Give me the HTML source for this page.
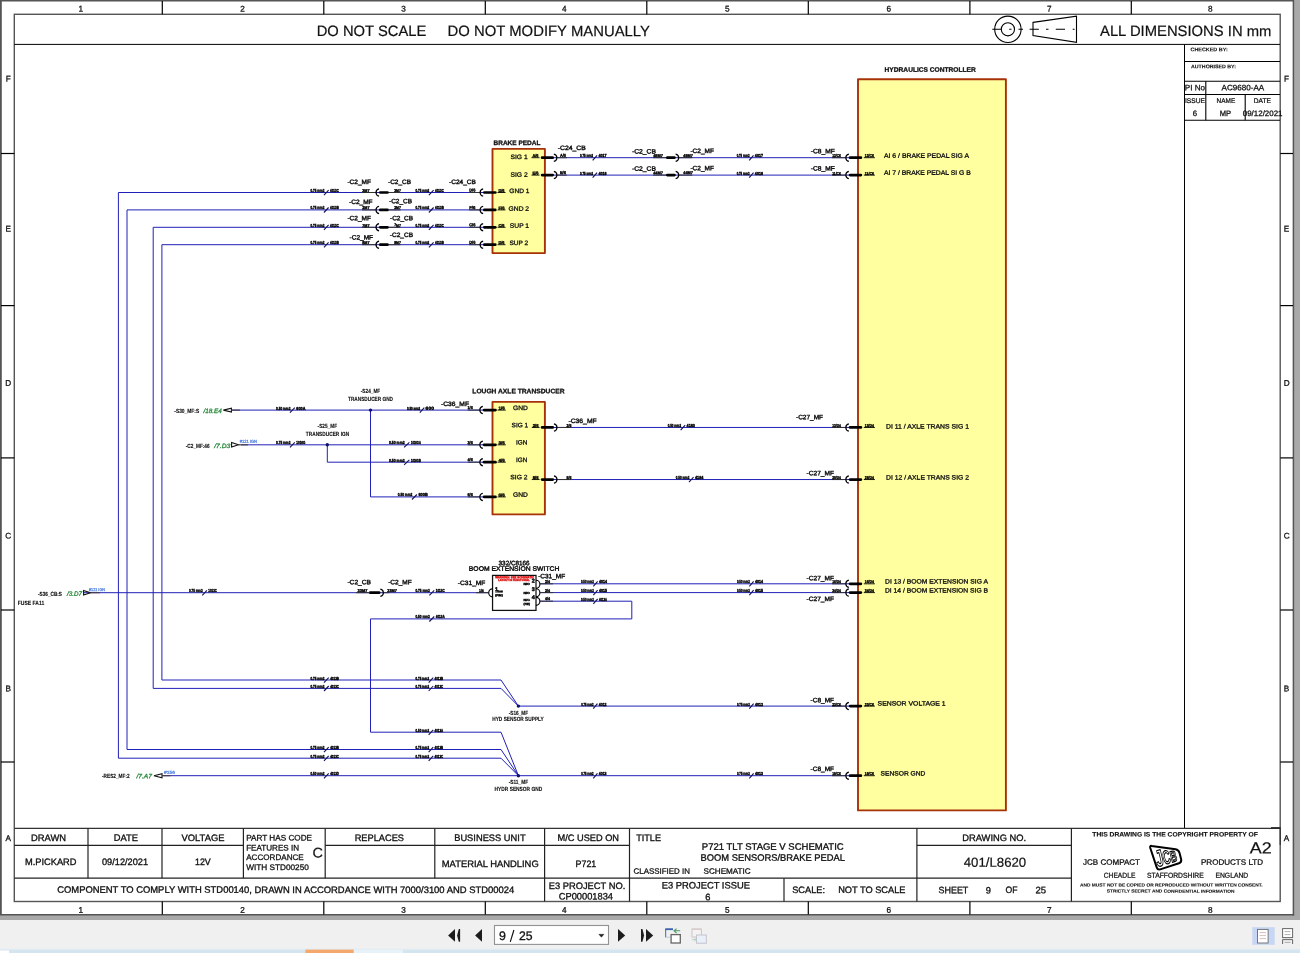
<!DOCTYPE html>
<html><head><meta charset="utf-8"><title>Schematic</title>
<style>
html,body{margin:0;padding:0;background:#fff;width:1300px;height:953px;overflow:hidden}
svg{display:block;will-change:transform;font-family:"Liberation Sans",sans-serif}
text{fill:#111;text-rendering:geometricPrecision}
</style></head><body>
<svg width="1300" height="953" viewBox="0 0 1300 953">
<rect x="0.00" y="0.00" width="1300.00" height="953.00" fill="#fff" stroke="none" stroke-width="1" />
<rect x="1294.00" y="0.00" width="6.00" height="920.00" fill="#a9a9a9" stroke="none" stroke-width="1" />
<rect x="0.00" y="915.00" width="1300.00" height="5.00" fill="#a9a9a9" stroke="none" stroke-width="1" />
<rect x="0.00" y="920.00" width="1300.00" height="29.50" fill="#f0f0f0" stroke="none" stroke-width="1" />
<rect x="0.00" y="948.60" width="1300.00" height="1.20" fill="#e4eef2" stroke="none" stroke-width="1" />
<rect x="0.00" y="949.60" width="1300.00" height="3.40" fill="#d5e5ef" stroke="none" stroke-width="1" />
<rect x="0.00" y="950.50" width="9.00" height="2.50" fill="#fff" stroke="none" stroke-width="1" />
<rect x="305.40" y="949.60" width="48.40" height="3.40" fill="#f4a86c" stroke="none" stroke-width="1" />
<rect x="353.80" y="949.60" width="49.20" height="3.40" fill="#e6f1f8" stroke="none" stroke-width="1" />
<line x1="0.90" y1="0.00" x2="0.90" y2="915.00" stroke="#555" stroke-width="1.8" />
<line x1="0.00" y1="0.80" x2="1294.00" y2="0.80" stroke="#555" stroke-width="1.6" />
<line x1="1293.40" y1="0.00" x2="1293.40" y2="915.50" stroke="#555" stroke-width="1.5" />
<line x1="0.00" y1="914.70" x2="1294.20" y2="914.70" stroke="#555" stroke-width="1.5" />
<rect x="14.30" y="14.30" width="1265.90" height="887.20" fill="none" stroke="#555" stroke-width="1.4" />
<line x1="14.30" y1="44.40" x2="1280.00" y2="44.40" stroke="#000" stroke-width="1" />
<line x1="162.30" y1="1.00" x2="162.30" y2="14.30" stroke="#000" stroke-width="1.2" />
<line x1="162.30" y1="901.50" x2="162.30" y2="914.50" stroke="#000" stroke-width="1.2" />
<line x1="323.80" y1="1.00" x2="323.80" y2="14.30" stroke="#000" stroke-width="1.2" />
<line x1="323.80" y1="901.50" x2="323.80" y2="914.50" stroke="#000" stroke-width="1.2" />
<line x1="485.30" y1="1.00" x2="485.30" y2="14.30" stroke="#000" stroke-width="1.2" />
<line x1="485.30" y1="901.50" x2="485.30" y2="914.50" stroke="#000" stroke-width="1.2" />
<line x1="646.80" y1="1.00" x2="646.80" y2="14.30" stroke="#000" stroke-width="1.2" />
<line x1="646.80" y1="901.50" x2="646.80" y2="914.50" stroke="#000" stroke-width="1.2" />
<line x1="808.30" y1="1.00" x2="808.30" y2="14.30" stroke="#000" stroke-width="1.2" />
<line x1="808.30" y1="901.50" x2="808.30" y2="914.50" stroke="#000" stroke-width="1.2" />
<line x1="969.90" y1="1.00" x2="969.90" y2="14.30" stroke="#000" stroke-width="1.2" />
<line x1="969.90" y1="901.50" x2="969.90" y2="914.50" stroke="#000" stroke-width="1.2" />
<line x1="1131.30" y1="1.00" x2="1131.30" y2="14.30" stroke="#000" stroke-width="1.2" />
<line x1="1131.30" y1="901.50" x2="1131.30" y2="914.50" stroke="#000" stroke-width="1.2" />
<text x="80.80" y="11.59" font-size="8.2" text-anchor="middle" stroke="#111" stroke-width="0.29" transform="rotate(0.03 80.8 11.6)" >1</text>
<text x="80.80" y="912.79" font-size="8.2" text-anchor="middle" stroke="#111" stroke-width="0.29" transform="rotate(0.03 80.8 912.8)" >1</text>
<text x="242.50" y="11.59" font-size="8.2" text-anchor="middle" stroke="#111" stroke-width="0.29" transform="rotate(0.03 242.5 11.6)" >2</text>
<text x="242.50" y="912.79" font-size="8.2" text-anchor="middle" stroke="#111" stroke-width="0.29" transform="rotate(0.03 242.5 912.8)" >2</text>
<text x="403.50" y="11.59" font-size="8.2" text-anchor="middle" stroke="#111" stroke-width="0.29" transform="rotate(0.03 403.5 11.6)" >3</text>
<text x="403.50" y="912.79" font-size="8.2" text-anchor="middle" stroke="#111" stroke-width="0.29" transform="rotate(0.03 403.5 912.8)" >3</text>
<text x="564.40" y="11.59" font-size="8.2" text-anchor="middle" stroke="#111" stroke-width="0.29" transform="rotate(0.03 564.4 11.6)" >4</text>
<text x="564.40" y="912.79" font-size="8.2" text-anchor="middle" stroke="#111" stroke-width="0.29" transform="rotate(0.03 564.4 912.8)" >4</text>
<text x="727.30" y="11.59" font-size="8.2" text-anchor="middle" stroke="#111" stroke-width="0.29" transform="rotate(0.03 727.3 11.6)" >5</text>
<text x="727.30" y="912.79" font-size="8.2" text-anchor="middle" stroke="#111" stroke-width="0.29" transform="rotate(0.03 727.3 912.8)" >5</text>
<text x="888.80" y="11.59" font-size="8.2" text-anchor="middle" stroke="#111" stroke-width="0.29" transform="rotate(0.03 888.8 11.6)" >6</text>
<text x="888.80" y="912.79" font-size="8.2" text-anchor="middle" stroke="#111" stroke-width="0.29" transform="rotate(0.03 888.8 912.8)" >6</text>
<text x="1049.40" y="11.59" font-size="8.2" text-anchor="middle" stroke="#111" stroke-width="0.29" transform="rotate(0.03 1049.4 11.6)" >7</text>
<text x="1049.40" y="912.79" font-size="8.2" text-anchor="middle" stroke="#111" stroke-width="0.29" transform="rotate(0.03 1049.4 912.8)" >7</text>
<text x="1210.30" y="11.59" font-size="8.2" text-anchor="middle" stroke="#111" stroke-width="0.29" transform="rotate(0.03 1210.3 11.6)" >8</text>
<text x="1210.30" y="912.79" font-size="8.2" text-anchor="middle" stroke="#111" stroke-width="0.29" transform="rotate(0.03 1210.3 912.8)" >8</text>
<line x1="1.00" y1="153.50" x2="14.30" y2="153.50" stroke="#000" stroke-width="1.2" />
<line x1="1280.30" y1="153.50" x2="1293.00" y2="153.50" stroke="#000" stroke-width="1.2" />
<line x1="1.00" y1="305.60" x2="14.30" y2="305.60" stroke="#000" stroke-width="1.2" />
<line x1="1280.30" y1="305.60" x2="1293.00" y2="305.60" stroke="#000" stroke-width="1.2" />
<line x1="1.00" y1="457.90" x2="14.30" y2="457.90" stroke="#000" stroke-width="1.2" />
<line x1="1280.30" y1="457.90" x2="1293.00" y2="457.90" stroke="#000" stroke-width="1.2" />
<line x1="1.00" y1="610.00" x2="14.30" y2="610.00" stroke="#000" stroke-width="1.2" />
<line x1="1280.30" y1="610.00" x2="1293.00" y2="610.00" stroke="#000" stroke-width="1.2" />
<line x1="1.00" y1="762.00" x2="14.30" y2="762.00" stroke="#000" stroke-width="1.2" />
<line x1="1280.30" y1="762.00" x2="1293.00" y2="762.00" stroke="#000" stroke-width="1.2" />
<text x="8.20" y="81.59" font-size="8.2" text-anchor="middle" stroke="#111" stroke-width="0.29" transform="rotate(0.03 8.2 81.6)" >F</text>
<text x="1286.60" y="81.59" font-size="8.2" text-anchor="middle" stroke="#111" stroke-width="0.29" transform="rotate(0.03 1286.6 81.6)" >F</text>
<text x="8.20" y="231.59" font-size="8.2" text-anchor="middle" stroke="#111" stroke-width="0.29" transform="rotate(0.03 8.2 231.6)" >E</text>
<text x="1286.60" y="231.59" font-size="8.2" text-anchor="middle" stroke="#111" stroke-width="0.29" transform="rotate(0.03 1286.6 231.6)" >E</text>
<text x="8.20" y="385.79" font-size="8.2" text-anchor="middle" stroke="#111" stroke-width="0.29" transform="rotate(0.03 8.2 385.8)" >D</text>
<text x="1286.60" y="385.79" font-size="8.2" text-anchor="middle" stroke="#111" stroke-width="0.29" transform="rotate(0.03 1286.6 385.8)" >D</text>
<text x="8.20" y="538.59" font-size="8.2" text-anchor="middle" stroke="#111" stroke-width="0.29" transform="rotate(0.03 8.2 538.6)" >C</text>
<text x="1286.60" y="538.59" font-size="8.2" text-anchor="middle" stroke="#111" stroke-width="0.29" transform="rotate(0.03 1286.6 538.6)" >C</text>
<text x="8.20" y="691.29" font-size="8.2" text-anchor="middle" stroke="#111" stroke-width="0.29" transform="rotate(0.03 8.2 691.3)" >B</text>
<text x="1286.60" y="691.29" font-size="8.2" text-anchor="middle" stroke="#111" stroke-width="0.29" transform="rotate(0.03 1286.6 691.3)" >B</text>
<text x="8.20" y="840.99" font-size="8.2" text-anchor="middle" stroke="#111" stroke-width="0.29" transform="rotate(0.03 8.2 841.0)" >A</text>
<text x="1286.60" y="840.99" font-size="8.2" text-anchor="middle" stroke="#111" stroke-width="0.29" transform="rotate(0.03 1286.6 841.0)" >A</text>
<text x="316.70" y="36.07" font-size="15" textLength="109.60" lengthAdjust="spacingAndGlyphs" stroke="#111" stroke-width="0.20" transform="rotate(0.03 316.7 36.1)" >DO NOT SCALE</text>
<text x="447.60" y="36.07" font-size="15" textLength="202.30" lengthAdjust="spacingAndGlyphs" stroke="#111" stroke-width="0.20" transform="rotate(0.03 447.6 36.1)" >DO NOT MODIFY MANUALLY</text>
<text x="1100.00" y="36.07" font-size="15" textLength="171.40" lengthAdjust="spacingAndGlyphs" stroke="#111" stroke-width="0.20" transform="rotate(0.03 1100.0 36.1)" >ALL DIMENSIONS IN mm</text>
<g stroke="#000" stroke-width="1.1" fill="none">
<circle cx="1007.9" cy="29.3" r="13.2"/><circle cx="1007.9" cy="29.3" r="6.6"/>
<path d="M992.3 29.3 H1001.2 M1009.2 29.3 H1011.5 M1018.5 29.3 H1023"/>
<path d="M1033 22.4 L1076.5 16.2 L1076.5 42.4 L1033 35.5 Z"/>
<path d="M1029.6 29.3 H1038.8 M1046 29.3 H1048.5 M1055.8 29.3 H1065 M1072.7 29.3 H1074.6"/>
</g>
<line x1="1184.50" y1="44.40" x2="1184.50" y2="828.30" stroke="#000" stroke-width="1" />
<line x1="1184.50" y1="61.50" x2="1280.00" y2="61.50" stroke="#000" stroke-width="1.1" />
<line x1="1184.50" y1="81.20" x2="1280.00" y2="81.20" stroke="#000" stroke-width="1.1" />
<line x1="1184.50" y1="94.50" x2="1280.00" y2="94.50" stroke="#000" stroke-width="1.1" />
<line x1="1184.50" y1="120.20" x2="1280.00" y2="120.20" stroke="#000" stroke-width="1.1" />
<line x1="1205.80" y1="81.20" x2="1205.80" y2="120.20" stroke="#000" stroke-width="1.1" />
<line x1="1245.20" y1="94.50" x2="1245.20" y2="120.20" stroke="#000" stroke-width="1.1" />
<text x="1190.50" y="51.20" font-size="5.2" font-weight="bold" textLength="37.20" lengthAdjust="spacingAndGlyphs" stroke="#111" stroke-width="0.10" transform="rotate(0.03 1190.5 51.2)" >CHECKED BY:</text>
<text x="1191.00" y="68.20" font-size="5.2" font-weight="bold" textLength="45.00" lengthAdjust="spacingAndGlyphs" stroke="#111" stroke-width="0.10" transform="rotate(0.03 1191.0 68.2)" >AUTHORISED BY:</text>
<text x="1184.80" y="90.14" font-size="7.8" textLength="20.20" lengthAdjust="spacingAndGlyphs" stroke="#111" stroke-width="0.27" transform="rotate(0.03 1184.8 90.1)" >PI No</text>
<text x="1221.50" y="90.14" font-size="7.8" textLength="42.70" lengthAdjust="spacingAndGlyphs" stroke="#111" stroke-width="0.27" transform="rotate(0.03 1221.5 90.1)" >AC9680-AA</text>
<text x="1185.00" y="103.08" font-size="6.8" textLength="20.00" lengthAdjust="spacingAndGlyphs" stroke="#111" stroke-width="0.24" transform="rotate(0.03 1185.0 103.1)" >ISSUE</text>
<text x="1216.50" y="103.08" font-size="6.8" textLength="18.70" lengthAdjust="spacingAndGlyphs" stroke="#111" stroke-width="0.24" transform="rotate(0.03 1216.5 103.1)" >NAME</text>
<text x="1253.80" y="103.08" font-size="6.8" textLength="17.20" lengthAdjust="spacingAndGlyphs" stroke="#111" stroke-width="0.24" transform="rotate(0.03 1253.8 103.1)" >DATE</text>
<text x="1195.00" y="116.04" font-size="7.8" text-anchor="middle" stroke="#111" stroke-width="0.27" transform="rotate(0.03 1195.0 116.0)" >6</text>
<text x="1219.80" y="116.04" font-size="7.8" textLength="11.40" lengthAdjust="spacingAndGlyphs" stroke="#111" stroke-width="0.27" transform="rotate(0.03 1219.8 116.0)" >MP</text>
<text x="1242.80" y="116.04" font-size="7.8" textLength="39.70" lengthAdjust="spacingAndGlyphs" stroke="#111" stroke-width="0.27" transform="rotate(0.03 1242.8 116.0)" >09/12/2021</text>
<line x1="14.30" y1="828.30" x2="1280.00" y2="828.30" stroke="#333" stroke-width="1.3" />
<line x1="1271.00" y1="827.90" x2="1280.60" y2="827.90" stroke="#222" stroke-width="1.5" />
<line x1="1280.30" y1="827.90" x2="1280.30" y2="845.00" stroke="#3a3a3a" stroke-width="1.4" />
<line x1="14.30" y1="845.30" x2="243.40" y2="845.30" stroke="#222" stroke-width="1.2" />
<line x1="325.20" y1="845.30" x2="629.50" y2="845.30" stroke="#222" stroke-width="1.2" />
<line x1="916.90" y1="845.30" x2="1071.40" y2="845.30" stroke="#222" stroke-width="1.2" />
<line x1="14.30" y1="878.20" x2="1071.40" y2="878.20" stroke="#222" stroke-width="1.2" />
<line x1="88.00" y1="828.30" x2="88.00" y2="878.20" stroke="#222" stroke-width="1.2" />
<line x1="162.00" y1="828.30" x2="162.00" y2="878.20" stroke="#222" stroke-width="1.2" />
<line x1="243.40" y1="828.30" x2="243.40" y2="878.20" stroke="#222" stroke-width="1.2" />
<line x1="325.20" y1="828.30" x2="325.20" y2="878.20" stroke="#222" stroke-width="1.2" />
<line x1="434.80" y1="828.30" x2="434.80" y2="878.20" stroke="#222" stroke-width="1.2" />
<line x1="544.60" y1="828.30" x2="544.60" y2="901.50" stroke="#222" stroke-width="1.2" />
<line x1="629.50" y1="828.30" x2="629.50" y2="901.50" stroke="#222" stroke-width="1.2" />
<line x1="784.00" y1="878.20" x2="784.00" y2="901.50" stroke="#222" stroke-width="1.2" />
<line x1="916.90" y1="828.30" x2="916.90" y2="901.50" stroke="#222" stroke-width="1.2" />
<line x1="1071.40" y1="828.30" x2="1071.40" y2="901.50" stroke="#222" stroke-width="1.2" />
<text x="31.00" y="840.89" font-size="9.3" textLength="35.00" lengthAdjust="spacingAndGlyphs" stroke="#111" stroke-width="0.32" transform="rotate(0.03 31.0 840.9)" >DRAWN</text>
<text x="113.70" y="840.89" font-size="9.3" textLength="24.30" lengthAdjust="spacingAndGlyphs" stroke="#111" stroke-width="0.32" transform="rotate(0.03 113.7 840.9)" >DATE</text>
<text x="181.50" y="840.89" font-size="9.3" textLength="43.00" lengthAdjust="spacingAndGlyphs" stroke="#111" stroke-width="0.32" transform="rotate(0.03 181.5 840.9)" >VOLTAGE</text>
<text x="25.00" y="864.89" font-size="9.3" textLength="51.50" lengthAdjust="spacingAndGlyphs" stroke="#111" stroke-width="0.32" transform="rotate(0.03 25.0 864.9)" >M.PICKARD</text>
<text x="102.00" y="864.89" font-size="9.3" textLength="46.00" lengthAdjust="spacingAndGlyphs" stroke="#111" stroke-width="0.32" transform="rotate(0.03 102.0 864.9)" >09/12/2021</text>
<text x="195.00" y="864.89" font-size="9.3" textLength="15.70" lengthAdjust="spacingAndGlyphs" stroke="#111" stroke-width="0.32" transform="rotate(0.03 195.0 864.9)" >12V</text>
<text x="246.20" y="840.52" font-size="8" textLength="65.80" lengthAdjust="spacingAndGlyphs" stroke="#111" stroke-width="0.28" transform="rotate(0.03 246.2 840.5)" >PART HAS CODE</text>
<text x="246.20" y="850.52" font-size="8" textLength="52.80" lengthAdjust="spacingAndGlyphs" stroke="#111" stroke-width="0.28" transform="rotate(0.03 246.2 850.5)" >FEATURES IN</text>
<text x="246.20" y="860.02" font-size="8" textLength="57.60" lengthAdjust="spacingAndGlyphs" stroke="#111" stroke-width="0.28" transform="rotate(0.03 246.2 860.0)" >ACCORDANCE</text>
<text x="246.20" y="869.92" font-size="8" textLength="62.60" lengthAdjust="spacingAndGlyphs" stroke="#111" stroke-width="0.28" transform="rotate(0.03 246.2 869.9)" >WITH STD00250</text>
<text x="312.40" y="857.60" font-size="14" textLength="10.40" lengthAdjust="spacingAndGlyphs" stroke="#111" stroke-width="0.20" transform="rotate(0.03 312.4 857.6)" >C</text>
<text x="354.70" y="840.89" font-size="9.3" textLength="49.30" lengthAdjust="spacingAndGlyphs" stroke="#111" stroke-width="0.32" transform="rotate(0.03 354.7 840.9)" >REPLACES</text>
<text x="454.20" y="840.89" font-size="9.3" textLength="71.40" lengthAdjust="spacingAndGlyphs" stroke="#111" stroke-width="0.32" transform="rotate(0.03 454.2 840.9)" >BUSINESS UNIT</text>
<text x="441.80" y="866.99" font-size="9.3" textLength="96.90" lengthAdjust="spacingAndGlyphs" stroke="#111" stroke-width="0.32" transform="rotate(0.03 441.8 867.0)" >MATERIAL HANDLING</text>
<text x="557.50" y="840.89" font-size="9.3" textLength="61.50" lengthAdjust="spacingAndGlyphs" stroke="#111" stroke-width="0.32" transform="rotate(0.03 557.5 840.9)" >M/C USED ON</text>
<text x="575.60" y="866.99" font-size="9.3" textLength="20.70" lengthAdjust="spacingAndGlyphs" stroke="#111" stroke-width="0.32" transform="rotate(0.03 575.6 867.0)" >P721</text>
<text x="57.20" y="892.79" font-size="9.3" textLength="457.00" lengthAdjust="spacingAndGlyphs" stroke="#111" stroke-width="0.32" transform="rotate(0.03 57.2 892.8)" >COMPONENT TO COMPLY WITH STD00140, DRAWN IN ACCORDANCE WITH 7000/3100 AND STD00024</text>
<text x="548.70" y="888.99" font-size="9.3" textLength="76.60" lengthAdjust="spacingAndGlyphs" stroke="#111" stroke-width="0.32" transform="rotate(0.03 548.7 889.0)" >E3 PROJECT NO.</text>
<text x="558.80" y="899.59" font-size="9.3" textLength="54.20" lengthAdjust="spacingAndGlyphs" stroke="#111" stroke-width="0.32" transform="rotate(0.03 558.8 899.6)" >CP00001834</text>
<text x="636.20" y="840.89" font-size="9.3" textLength="24.80" lengthAdjust="spacingAndGlyphs" stroke="#111" stroke-width="0.32" transform="rotate(0.03 636.2 840.9)" >TITLE</text>
<text x="701.80" y="849.69" font-size="9.3" textLength="141.90" lengthAdjust="spacingAndGlyphs" stroke="#111" stroke-width="0.32" transform="rotate(0.03 701.8 849.7)" >P721 TLT STAGE V SCHEMATIC</text>
<text x="700.60" y="860.69" font-size="9.3" textLength="144.30" lengthAdjust="spacingAndGlyphs" stroke="#111" stroke-width="0.32" transform="rotate(0.03 700.6 860.7)" >BOOM SENSORS/BRAKE PEDAL</text>
<text x="633.60" y="873.74" font-size="7.8" textLength="56.30" lengthAdjust="spacingAndGlyphs" stroke="#111" stroke-width="0.27" transform="rotate(0.03 633.6 873.7)" >CLASSIFIED IN</text>
<text x="703.50" y="873.74" font-size="7.8" textLength="47.20" lengthAdjust="spacingAndGlyphs" stroke="#111" stroke-width="0.27" transform="rotate(0.03 703.5 873.7)" >SCHEMATIC</text>
<text x="661.70" y="888.59" font-size="9.3" textLength="88.30" lengthAdjust="spacingAndGlyphs" stroke="#111" stroke-width="0.32" transform="rotate(0.03 661.7 888.6)" >E3 PROJECT ISSUE</text>
<text x="707.80" y="900.19" font-size="9.3" text-anchor="middle" stroke="#111" stroke-width="0.32" transform="rotate(0.03 707.8 900.2)" >6</text>
<text x="792.20" y="892.89" font-size="9.3" textLength="32.80" lengthAdjust="spacingAndGlyphs" stroke="#111" stroke-width="0.32" transform="rotate(0.03 792.2 892.9)" >SCALE:</text>
<text x="838.20" y="892.89" font-size="9.3" textLength="67.30" lengthAdjust="spacingAndGlyphs" stroke="#111" stroke-width="0.32" transform="rotate(0.03 838.2 892.9)" >NOT TO SCALE</text>
<text x="962.20" y="840.89" font-size="9.3" textLength="64.00" lengthAdjust="spacingAndGlyphs" stroke="#111" stroke-width="0.32" transform="rotate(0.03 962.2 840.9)" >DRAWING NO.</text>
<text x="963.70" y="866.84" font-size="13" textLength="62.50" lengthAdjust="spacingAndGlyphs" stroke="#111" stroke-width="0.20" transform="rotate(0.03 963.7 866.8)" >401/L8620</text>
<text x="938.50" y="893.19" font-size="9.3" textLength="29.80" lengthAdjust="spacingAndGlyphs" stroke="#111" stroke-width="0.32" transform="rotate(0.03 938.5 893.2)" >SHEET</text>
<text x="988.30" y="893.59" font-size="9.3" text-anchor="middle" stroke="#111" stroke-width="0.32" transform="rotate(0.03 988.3 893.6)" >9</text>
<text x="1005.50" y="893.19" font-size="9.3" textLength="12.00" lengthAdjust="spacingAndGlyphs" stroke="#111" stroke-width="0.32" transform="rotate(0.03 1005.5 893.2)" >OF</text>
<text x="1035.40" y="893.19" font-size="9.3" textLength="10.60" lengthAdjust="spacingAndGlyphs" stroke="#111" stroke-width="0.32" transform="rotate(0.03 1035.4 893.2)" >25</text>
<text x="1092.30" y="836.53" font-size="6.4" font-weight="bold" textLength="165.50" lengthAdjust="spacingAndGlyphs" stroke="#111" stroke-width="0.13" transform="rotate(0.03 1092.3 836.5)" >THIS DRAWING IS THE COPYRIGHT PROPERTY OF</text>
<text x="1249.80" y="853.50" font-size="16.2" textLength="21.90" lengthAdjust="spacingAndGlyphs" stroke="#111" stroke-width="0.20" transform="rotate(0.03 1249.8 853.5)" >A2</text>
<text x="1083.00" y="864.64" font-size="7.8" textLength="57.00" lengthAdjust="spacingAndGlyphs" stroke="#111" stroke-width="0.27" transform="rotate(0.03 1083.0 864.6)" >JCB COMPACT</text>
<text x="1201.00" y="864.64" font-size="7.8" textLength="62.00" lengthAdjust="spacingAndGlyphs" stroke="#111" stroke-width="0.27" transform="rotate(0.03 1201.0 864.6)" >PRODUCTS LTD</text>
<text x="1103.70" y="877.72" font-size="7.2" textLength="31.70" lengthAdjust="spacingAndGlyphs" stroke="#111" stroke-width="0.25" transform="rotate(0.03 1103.7 877.7)" >CHEADLE</text>
<text x="1147.00" y="877.72" font-size="7.2" textLength="56.70" lengthAdjust="spacingAndGlyphs" stroke="#111" stroke-width="0.25" transform="rotate(0.03 1147.0 877.7)" >STAFFORDSHIRE</text>
<text x="1215.40" y="877.72" font-size="7.2" textLength="32.90" lengthAdjust="spacingAndGlyphs" stroke="#111" stroke-width="0.25" transform="rotate(0.03 1215.4 877.7)" >ENGLAND</text>
<text x="1080.00" y="886.40" font-size="4.4" font-weight="bold" textLength="182.50" lengthAdjust="spacingAndGlyphs" stroke="#111" stroke-width="0.09" transform="rotate(0.03 1080.0 886.4)" >AND MUST NOT BE COPIED OR REPRODUCED WITHOUT WRITTEN CONSENT.</text>
<text x="1106.80" y="892.60" font-size="4.4" font-weight="bold" textLength="127.70" lengthAdjust="spacingAndGlyphs" stroke="#111" stroke-width="0.09" transform="rotate(0.03 1106.8 892.6)" >STRICTLY SECRET AND CONFIDENTIAL INFORMATION</text>
<g stroke="#000" fill="none" stroke-linejoin="round">
<path d="M1151.6 845.9 L1175.6 849.2 Q1178.6 849.9 1179.4 852.6 L1181.2 859.6 Q1181.6 862.4 1179.0 863.2 L1160.2 869.4 Q1157.6 870.0 1156.8 867.6 L1150.2 847.8 Q1149.8 845.6 1151.6 845.9 Z" stroke-width="2.0"/>
<text x="0" y="0" transform="translate(1157.40,867.00) rotate(-17) scale(0.6,1) skewX(-6)" font-size="23.0" font-weight="bold" stroke="#000" stroke-width="1.25" style="fill:#fff">J</text>
<text x="0" y="0" transform="translate(1164.60,864.70) rotate(-17) scale(0.54,1) skewX(-6)" font-size="19.0" font-weight="bold" stroke="#000" stroke-width="1.25" style="fill:#fff">C</text>
<text x="0" y="0" transform="translate(1171.80,862.60) rotate(-17) scale(0.56,1) skewX(-6)" font-size="15.5" font-weight="bold" stroke="#000" stroke-width="1.25" style="fill:#fff">B</text>
</g>
<rect x="858.00" y="79.20" width="147.90" height="731.20" fill="#ffffa0" stroke="#a83208" stroke-width="1.9" stroke-linejoin="round"/>
<rect x="492.50" y="148.90" width="52.40" height="104.20" fill="#ffffa0" stroke="#a83208" stroke-width="1.9" stroke-linejoin="round"/>
<rect x="492.50" y="401.90" width="52.40" height="112.50" fill="#ffffa0" stroke="#a83208" stroke-width="1.9" stroke-linejoin="round"/>
<path d="M491.00 192.50 L118.40 192.50 L118.40 758.20 L501.00 758.20 L518.40 775.70" stroke="#2020b8" stroke-width="1.0" fill="none" stroke-linejoin="miter"/>
<path d="M491.00 209.90 L127.00 209.90 L127.00 749.50 L501.00 749.50 L518.40 775.70" stroke="#2020b8" stroke-width="1.0" fill="none" stroke-linejoin="miter"/>
<path d="M491.00 227.30 L153.20 227.30 L153.20 688.40 L501.00 688.40 L518.40 706.10" stroke="#2020b8" stroke-width="1.0" fill="none" stroke-linejoin="miter"/>
<path d="M491.00 244.70 L161.90 244.70 L161.90 680.00 L501.00 680.00 L518.40 706.10" stroke="#2020b8" stroke-width="1.0" fill="none" stroke-linejoin="miter"/>
<path d="M546.00 157.70 L858.20 157.70" stroke="#2020b8" stroke-width="1.0" fill="none" stroke-linejoin="miter"/>
<path d="M546.00 175.10 L858.20 175.10" stroke="#2020b8" stroke-width="1.0" fill="none" stroke-linejoin="miter"/>
<path d="M231.50 410.10 L492.00 410.10" stroke="#2020b8" stroke-width="1.0" fill="none" stroke-linejoin="miter"/>
<path d="M370.50 410.10 L370.50 496.90 L492.00 496.90" stroke="#2020b8" stroke-width="1.0" fill="none" stroke-linejoin="miter"/>
<path d="M240.80 444.82 L492.00 444.82" stroke="#2020b8" stroke-width="1.0" fill="none" stroke-linejoin="miter"/>
<path d="M327.30 444.82 L327.30 462.18 L492.00 462.18" stroke="#2020b8" stroke-width="1.0" fill="none" stroke-linejoin="miter"/>
<path d="M546.00 427.46 L858.20 427.46" stroke="#2020b8" stroke-width="1.0" fill="none" stroke-linejoin="miter"/>
<path d="M546.00 479.54 L858.20 479.54" stroke="#2020b8" stroke-width="1.0" fill="none" stroke-linejoin="miter"/>
<path d="M84.00 592.70 L489.00 592.70" stroke="#2020b8" stroke-width="1.0" fill="none" stroke-linejoin="miter"/>
<path d="M540.00 583.80 L858.20 583.80" stroke="#2020b8" stroke-width="1.0" fill="none" stroke-linejoin="miter"/>
<path d="M540.00 592.60 L858.20 592.60" stroke="#2020b8" stroke-width="1.0" fill="none" stroke-linejoin="miter"/>
<path d="M540.00 601.20 L631.80 601.20 L631.80 618.90 L370.50 618.90 L370.50 732.20 L501.00 732.20 L518.40 775.70" stroke="#2020b8" stroke-width="1.0" fill="none" stroke-linejoin="miter"/>
<path d="M518.40 706.10 L858.20 706.10" stroke="#2020b8" stroke-width="1.0" fill="none" stroke-linejoin="miter"/>
<path d="M162.40 775.70 L858.20 775.70" stroke="#2020b8" stroke-width="1.0" fill="none" stroke-linejoin="miter"/>
<circle cx="370.5" cy="410.10" r="1.7" fill="#101070"/>
<circle cx="327.3" cy="444.82" r="1.7" fill="#101070"/>
<circle cx="518.4" cy="706.10" r="1.7" fill="#101070"/>
<circle cx="518.4" cy="775.70" r="1.7" fill="#101070"/>
<text x="493.50" y="145.07" font-size="6.5" font-weight="bold" textLength="47.00" lengthAdjust="spacingAndGlyphs" stroke="#111" stroke-width="0.30" transform="rotate(0.03 493.5 145.1)" >BRAKE PEDAL</text>
<text x="472.30" y="393.17" font-size="6.5" font-weight="bold" textLength="92.20" lengthAdjust="spacingAndGlyphs" stroke="#111" stroke-width="0.30" transform="rotate(0.03 472.3 393.2)" >LOUGH AXLE TRANSDUCER</text>
<text x="884.60" y="71.77" font-size="6.5" font-weight="bold" textLength="91.20" lengthAdjust="spacingAndGlyphs" stroke="#111" stroke-width="0.30" transform="rotate(0.03 884.6 71.8)" >HYDRAULICS CONTROLLER</text>
<text x="510.50" y="159.10" font-size="6.3" textLength="17.20" lengthAdjust="spacingAndGlyphs" stroke="#111" stroke-width="0.30" transform="rotate(0.03 510.5 159.1)" >SIG 1</text>
<text x="510.50" y="176.80" font-size="6.3" textLength="17.20" lengthAdjust="spacingAndGlyphs" stroke="#111" stroke-width="0.30" transform="rotate(0.03 510.5 176.8)" >SIG 2</text>
<text x="509.30" y="193.10" font-size="6.3" textLength="20.10" lengthAdjust="spacingAndGlyphs" stroke="#111" stroke-width="0.30" transform="rotate(0.03 509.3 193.1)" >GND 1</text>
<text x="508.60" y="210.80" font-size="6.3" textLength="20.50" lengthAdjust="spacingAndGlyphs" stroke="#111" stroke-width="0.30" transform="rotate(0.03 508.6 210.8)" >GND 2</text>
<text x="509.80" y="227.80" font-size="6.3" textLength="19.30" lengthAdjust="spacingAndGlyphs" stroke="#111" stroke-width="0.30" transform="rotate(0.03 509.8 227.8)" >SUP 1</text>
<text x="509.40" y="245.00" font-size="6.3" textLength="18.80" lengthAdjust="spacingAndGlyphs" stroke="#111" stroke-width="0.30" transform="rotate(0.03 509.4 245.0)" >SUP 2</text>
<text x="532.50" y="157.20" font-size="4.2" font-weight="bold" textLength="6.00" lengthAdjust="spacingAndGlyphs" fill="#000" stroke="#000" stroke-width="0.35" style="fill:#000" transform="rotate(0.03 532.5 157.2)">A/6</text>
<line x1="531.50" y1="157.70" x2="539.50" y2="157.70" stroke="#000" stroke-width="0.9" />
<line x1="556.90" y1="157.70" x2="566.90" y2="157.70" stroke="#333" stroke-width="1.0" />
<path d="M553.84 154.06 A3.7 3.7 0 0 1 553.84 161.34" stroke="#000" stroke-width="1.2" fill="none" />
<line x1="542.10" y1="157.70" x2="552.65" y2="157.70" stroke="#000" stroke-width="2.7" stroke-linecap="round"/>
<text x="559.90" y="156.70" font-size="4.2" font-weight="bold" textLength="6.10" lengthAdjust="spacingAndGlyphs" fill="#000" stroke="#000" stroke-width="0.35" style="fill:#000" transform="rotate(0.03 559.9 156.7)">A/6</text>
<text x="532.50" y="174.60" font-size="4.2" font-weight="bold" textLength="6.00" lengthAdjust="spacingAndGlyphs" fill="#000" stroke="#000" stroke-width="0.35" style="fill:#000" transform="rotate(0.03 532.5 174.6)">E/6</text>
<line x1="531.50" y1="175.10" x2="539.50" y2="175.10" stroke="#000" stroke-width="0.9" />
<line x1="556.90" y1="175.10" x2="566.90" y2="175.10" stroke="#333" stroke-width="1.0" />
<path d="M553.84 171.46 A3.7 3.7 0 0 1 553.84 178.74" stroke="#000" stroke-width="1.2" fill="none" />
<line x1="542.10" y1="175.10" x2="552.65" y2="175.10" stroke="#000" stroke-width="2.7" stroke-linecap="round"/>
<text x="559.90" y="174.10" font-size="4.2" font-weight="bold" textLength="6.10" lengthAdjust="spacingAndGlyphs" fill="#000" stroke="#000" stroke-width="0.35" style="fill:#000" transform="rotate(0.03 559.9 174.1)">E/6</text>
<line x1="469.10" y1="192.50" x2="480.10" y2="192.50" stroke="#333" stroke-width="1.0" />
<path d="M483.16 188.86 A3.7 3.7 0 0 0 483.16 196.14" stroke="#000" stroke-width="1.2" fill="none" />
<line x1="484.35" y1="192.50" x2="495.30" y2="192.50" stroke="#000" stroke-width="2.7" stroke-linecap="round"/>
<text x="498.50" y="192.00" font-size="4.2" font-weight="bold" textLength="6.00" lengthAdjust="spacingAndGlyphs" fill="#000" stroke="#000" stroke-width="0.35" style="fill:#000" transform="rotate(0.03 498.5 192.0)">D/6</text>
<line x1="497.50" y1="192.50" x2="505.50" y2="192.50" stroke="#000" stroke-width="0.9" />
<text x="469.20" y="191.50" font-size="4.2" font-weight="bold" textLength="6.20" lengthAdjust="spacingAndGlyphs" fill="#000" stroke="#000" stroke-width="0.35" style="fill:#000" transform="rotate(0.03 469.2 191.5)">D/6</text>
<line x1="469.10" y1="209.90" x2="480.10" y2="209.90" stroke="#333" stroke-width="1.0" />
<path d="M483.16 206.26 A3.7 3.7 0 0 0 483.16 213.54" stroke="#000" stroke-width="1.2" fill="none" />
<line x1="484.35" y1="209.90" x2="495.30" y2="209.90" stroke="#000" stroke-width="2.7" stroke-linecap="round"/>
<text x="498.50" y="209.40" font-size="4.2" font-weight="bold" textLength="6.00" lengthAdjust="spacingAndGlyphs" fill="#000" stroke="#000" stroke-width="0.35" style="fill:#000" transform="rotate(0.03 498.5 209.4)">F/6</text>
<line x1="497.50" y1="209.90" x2="505.50" y2="209.90" stroke="#000" stroke-width="0.9" />
<text x="469.20" y="208.90" font-size="4.2" font-weight="bold" textLength="6.20" lengthAdjust="spacingAndGlyphs" fill="#000" stroke="#000" stroke-width="0.35" style="fill:#000" transform="rotate(0.03 469.2 208.9)">F/6</text>
<line x1="469.10" y1="227.30" x2="480.10" y2="227.30" stroke="#333" stroke-width="1.0" />
<path d="M483.16 223.66 A3.7 3.7 0 0 0 483.16 230.94" stroke="#000" stroke-width="1.2" fill="none" />
<line x1="484.35" y1="227.30" x2="495.30" y2="227.30" stroke="#000" stroke-width="2.7" stroke-linecap="round"/>
<text x="498.50" y="226.80" font-size="4.2" font-weight="bold" textLength="6.00" lengthAdjust="spacingAndGlyphs" fill="#000" stroke="#000" stroke-width="0.35" style="fill:#000" transform="rotate(0.03 498.5 226.8)">C/6</text>
<line x1="497.50" y1="227.30" x2="505.50" y2="227.30" stroke="#000" stroke-width="0.9" />
<text x="469.20" y="226.30" font-size="4.2" font-weight="bold" textLength="6.20" lengthAdjust="spacingAndGlyphs" fill="#000" stroke="#000" stroke-width="0.35" style="fill:#000" transform="rotate(0.03 469.2 226.3)">C/6</text>
<line x1="469.10" y1="244.70" x2="480.10" y2="244.70" stroke="#333" stroke-width="1.0" />
<path d="M483.16 241.06 A3.7 3.7 0 0 0 483.16 248.34" stroke="#000" stroke-width="1.2" fill="none" />
<line x1="484.35" y1="244.70" x2="495.30" y2="244.70" stroke="#000" stroke-width="2.7" stroke-linecap="round"/>
<text x="498.50" y="244.20" font-size="4.2" font-weight="bold" textLength="6.00" lengthAdjust="spacingAndGlyphs" fill="#000" stroke="#000" stroke-width="0.35" style="fill:#000" transform="rotate(0.03 498.5 244.2)">D/6</text>
<line x1="497.50" y1="244.70" x2="505.50" y2="244.70" stroke="#000" stroke-width="0.9" />
<text x="469.20" y="243.70" font-size="4.2" font-weight="bold" textLength="6.20" lengthAdjust="spacingAndGlyphs" fill="#000" stroke="#000" stroke-width="0.35" style="fill:#000" transform="rotate(0.03 469.2 243.7)">D/6</text>
<line x1="362.00" y1="192.50" x2="376.00" y2="192.50" stroke="#333" stroke-width="1.0" />
<path d="M379.06 188.86 A3.7 3.7 0 0 0 379.06 196.14" stroke="#000" stroke-width="1.2" fill="none" />
<line x1="380.25" y1="192.50" x2="387.50" y2="192.50" stroke="#000" stroke-width="2.7" stroke-linecap="round"/>
<text x="362.20" y="191.70" font-size="4.2" font-weight="bold" textLength="7.30" lengthAdjust="spacingAndGlyphs" fill="#000" stroke="#000" stroke-width="0.35" style="fill:#000" transform="rotate(0.03 362.2 191.7)">3M7</text>
<text x="394.20" y="191.70" font-size="4.2" font-weight="bold" textLength="6.60" lengthAdjust="spacingAndGlyphs" fill="#000" stroke="#000" stroke-width="0.35" style="fill:#000" transform="rotate(0.03 394.2 191.7)">3M7</text>
<line x1="388.80" y1="192.50" x2="400.60" y2="192.50" stroke="#333" stroke-width="1.0" />
<text x="310.50" y="192.05" font-size="4.4" font-weight="bold" textLength="13.87" lengthAdjust="spacingAndGlyphs" fill="#000" stroke="#000" stroke-width="0.38" style="fill:#000" transform="rotate(0.03 310.5 192.1)">0.75 mm2</text>
<text x="330.03" y="192.05" font-size="4.4" font-weight="bold" textLength="8.77" lengthAdjust="spacingAndGlyphs" fill="#000" stroke="#000" stroke-width="0.38" style="fill:#000" transform="rotate(0.03 330.0 192.1)">4013C</text>
<line x1="323.94" y1="195.10" x2="328.61" y2="190.10" stroke="#101058" stroke-width="1.1" />
<text x="415.40" y="192.05" font-size="4.4" font-weight="bold" textLength="13.92" lengthAdjust="spacingAndGlyphs" fill="#000" stroke="#000" stroke-width="0.38" style="fill:#000" transform="rotate(0.03 415.4 192.1)">0.75 mm2</text>
<text x="435.00" y="192.05" font-size="4.4" font-weight="bold" textLength="8.80" lengthAdjust="spacingAndGlyphs" fill="#000" stroke="#000" stroke-width="0.38" style="fill:#000" transform="rotate(0.03 435.0 192.1)">4013C</text>
<line x1="428.89" y1="195.10" x2="433.58" y2="190.10" stroke="#101058" stroke-width="1.1" />
<line x1="362.00" y1="209.90" x2="376.00" y2="209.90" stroke="#333" stroke-width="1.0" />
<path d="M379.06 206.26 A3.7 3.7 0 0 0 379.06 213.54" stroke="#000" stroke-width="1.2" fill="none" />
<line x1="380.25" y1="209.90" x2="387.50" y2="209.90" stroke="#000" stroke-width="2.7" stroke-linecap="round"/>
<text x="362.20" y="209.10" font-size="4.2" font-weight="bold" textLength="7.30" lengthAdjust="spacingAndGlyphs" fill="#000" stroke="#000" stroke-width="0.35" style="fill:#000" transform="rotate(0.03 362.2 209.1)">2M7</text>
<text x="394.20" y="209.10" font-size="4.2" font-weight="bold" textLength="6.60" lengthAdjust="spacingAndGlyphs" fill="#000" stroke="#000" stroke-width="0.35" style="fill:#000" transform="rotate(0.03 394.2 209.1)">2M7</text>
<line x1="388.80" y1="209.90" x2="400.60" y2="209.90" stroke="#333" stroke-width="1.0" />
<text x="310.50" y="209.45" font-size="4.4" font-weight="bold" textLength="13.87" lengthAdjust="spacingAndGlyphs" fill="#000" stroke="#000" stroke-width="0.38" style="fill:#000" transform="rotate(0.03 310.5 209.4)">0.75 mm2</text>
<text x="330.03" y="209.45" font-size="4.4" font-weight="bold" textLength="8.77" lengthAdjust="spacingAndGlyphs" fill="#000" stroke="#000" stroke-width="0.38" style="fill:#000" transform="rotate(0.03 330.0 209.4)">4013B</text>
<line x1="323.94" y1="212.50" x2="328.61" y2="207.50" stroke="#101058" stroke-width="1.1" />
<text x="415.40" y="209.45" font-size="4.4" font-weight="bold" textLength="13.92" lengthAdjust="spacingAndGlyphs" fill="#000" stroke="#000" stroke-width="0.38" style="fill:#000" transform="rotate(0.03 415.4 209.4)">0.75 mm2</text>
<text x="435.00" y="209.45" font-size="4.4" font-weight="bold" textLength="8.80" lengthAdjust="spacingAndGlyphs" fill="#000" stroke="#000" stroke-width="0.38" style="fill:#000" transform="rotate(0.03 435.0 209.4)">4013B</text>
<line x1="428.89" y1="212.50" x2="433.58" y2="207.50" stroke="#101058" stroke-width="1.1" />
<line x1="362.00" y1="227.30" x2="376.00" y2="227.30" stroke="#333" stroke-width="1.0" />
<path d="M379.06 223.66 A3.7 3.7 0 0 0 379.06 230.94" stroke="#000" stroke-width="1.2" fill="none" />
<line x1="380.25" y1="227.30" x2="387.50" y2="227.30" stroke="#000" stroke-width="2.7" stroke-linecap="round"/>
<text x="362.20" y="226.50" font-size="4.2" font-weight="bold" textLength="7.30" lengthAdjust="spacingAndGlyphs" fill="#000" stroke="#000" stroke-width="0.35" style="fill:#000" transform="rotate(0.03 362.2 226.5)">7M7</text>
<text x="394.20" y="226.50" font-size="4.2" font-weight="bold" textLength="6.60" lengthAdjust="spacingAndGlyphs" fill="#000" stroke="#000" stroke-width="0.35" style="fill:#000" transform="rotate(0.03 394.2 226.5)">7M7</text>
<line x1="388.80" y1="227.30" x2="400.60" y2="227.30" stroke="#333" stroke-width="1.0" />
<text x="310.50" y="226.85" font-size="4.4" font-weight="bold" textLength="13.87" lengthAdjust="spacingAndGlyphs" fill="#000" stroke="#000" stroke-width="0.38" style="fill:#000" transform="rotate(0.03 310.5 226.8)">0.75 mm2</text>
<text x="330.03" y="226.85" font-size="4.4" font-weight="bold" textLength="8.77" lengthAdjust="spacingAndGlyphs" fill="#000" stroke="#000" stroke-width="0.38" style="fill:#000" transform="rotate(0.03 330.0 226.8)">4013C</text>
<line x1="323.94" y1="229.90" x2="328.61" y2="224.90" stroke="#101058" stroke-width="1.1" />
<text x="415.40" y="226.85" font-size="4.4" font-weight="bold" textLength="13.92" lengthAdjust="spacingAndGlyphs" fill="#000" stroke="#000" stroke-width="0.38" style="fill:#000" transform="rotate(0.03 415.4 226.8)">0.75 mm2</text>
<text x="435.00" y="226.85" font-size="4.4" font-weight="bold" textLength="8.80" lengthAdjust="spacingAndGlyphs" fill="#000" stroke="#000" stroke-width="0.38" style="fill:#000" transform="rotate(0.03 435.0 226.8)">4013C</text>
<line x1="428.89" y1="229.90" x2="433.58" y2="224.90" stroke="#101058" stroke-width="1.1" />
<line x1="362.00" y1="244.70" x2="376.00" y2="244.70" stroke="#333" stroke-width="1.0" />
<path d="M379.06 241.06 A3.7 3.7 0 0 0 379.06 248.34" stroke="#000" stroke-width="1.2" fill="none" />
<line x1="380.25" y1="244.70" x2="387.50" y2="244.70" stroke="#000" stroke-width="2.7" stroke-linecap="round"/>
<text x="362.20" y="243.90" font-size="4.2" font-weight="bold" textLength="7.30" lengthAdjust="spacingAndGlyphs" fill="#000" stroke="#000" stroke-width="0.35" style="fill:#000" transform="rotate(0.03 362.2 243.9)">8M7</text>
<text x="394.20" y="243.90" font-size="4.2" font-weight="bold" textLength="6.60" lengthAdjust="spacingAndGlyphs" fill="#000" stroke="#000" stroke-width="0.35" style="fill:#000" transform="rotate(0.03 394.2 243.9)">8M7</text>
<line x1="388.80" y1="244.70" x2="400.60" y2="244.70" stroke="#333" stroke-width="1.0" />
<text x="310.50" y="244.25" font-size="4.4" font-weight="bold" textLength="13.87" lengthAdjust="spacingAndGlyphs" fill="#000" stroke="#000" stroke-width="0.38" style="fill:#000" transform="rotate(0.03 310.5 244.2)">0.75 mm2</text>
<text x="330.03" y="244.25" font-size="4.4" font-weight="bold" textLength="8.77" lengthAdjust="spacingAndGlyphs" fill="#000" stroke="#000" stroke-width="0.38" style="fill:#000" transform="rotate(0.03 330.0 244.2)">4013B</text>
<line x1="323.94" y1="247.30" x2="328.61" y2="242.30" stroke="#101058" stroke-width="1.1" />
<text x="415.40" y="244.25" font-size="4.4" font-weight="bold" textLength="13.92" lengthAdjust="spacingAndGlyphs" fill="#000" stroke="#000" stroke-width="0.38" style="fill:#000" transform="rotate(0.03 415.4 244.2)">0.75 mm2</text>
<text x="435.00" y="244.25" font-size="4.4" font-weight="bold" textLength="8.80" lengthAdjust="spacingAndGlyphs" fill="#000" stroke="#000" stroke-width="0.38" style="fill:#000" transform="rotate(0.03 435.0 244.2)">4013B</text>
<line x1="428.89" y1="247.30" x2="433.58" y2="242.30" stroke="#101058" stroke-width="1.1" />
<text x="347.40" y="183.90" font-size="6.3" textLength="23.60" lengthAdjust="spacingAndGlyphs" stroke="#111" stroke-width="0.40" transform="rotate(0.03 347.4 183.9)" >-C2_MF</text>
<text x="388.00" y="183.90" font-size="6.3" textLength="23.00" lengthAdjust="spacingAndGlyphs" stroke="#111" stroke-width="0.40" transform="rotate(0.03 388.0 183.9)" >-C2_CB</text>
<text x="449.00" y="183.90" font-size="6.3" textLength="27.00" lengthAdjust="spacingAndGlyphs" stroke="#111" stroke-width="0.40" transform="rotate(0.03 449.0 183.9)" >-C24_CB</text>
<text x="349.00" y="204.10" font-size="6.3" textLength="23.60" lengthAdjust="spacingAndGlyphs" stroke="#111" stroke-width="0.40" transform="rotate(0.03 349.0 204.1)" >-C2_MF</text>
<text x="389.00" y="203.30" font-size="6.3" textLength="23.00" lengthAdjust="spacingAndGlyphs" stroke="#111" stroke-width="0.40" transform="rotate(0.03 389.0 203.3)" >-C2_CB</text>
<text x="347.40" y="220.30" font-size="6.3" textLength="23.60" lengthAdjust="spacingAndGlyphs" stroke="#111" stroke-width="0.40" transform="rotate(0.03 347.4 220.3)" >-C2_MF</text>
<text x="390.00" y="220.30" font-size="6.3" textLength="23.00" lengthAdjust="spacingAndGlyphs" stroke="#111" stroke-width="0.40" transform="rotate(0.03 390.0 220.3)" >-C2_CB</text>
<text x="349.60" y="239.60" font-size="6.3" textLength="23.40" lengthAdjust="spacingAndGlyphs" stroke="#111" stroke-width="0.40" transform="rotate(0.03 349.6 239.6)" >-C2_MF</text>
<text x="389.80" y="237.10" font-size="6.3" textLength="23.20" lengthAdjust="spacingAndGlyphs" stroke="#111" stroke-width="0.40" transform="rotate(0.03 389.8 237.1)" >-C2_CB</text>
<text x="557.80" y="149.90" font-size="6.3" textLength="28.00" lengthAdjust="spacingAndGlyphs" stroke="#111" stroke-width="0.40" transform="rotate(0.03 557.8 149.9)" >-C24_CB</text>
<text x="632.00" y="153.50" font-size="6.3" textLength="23.90" lengthAdjust="spacingAndGlyphs" stroke="#111" stroke-width="0.40" transform="rotate(0.03 632.0 153.5)" >-C2_CB</text>
<text x="690.40" y="153.00" font-size="6.3" textLength="23.60" lengthAdjust="spacingAndGlyphs" stroke="#111" stroke-width="0.40" transform="rotate(0.03 690.4 153.0)" >-C2_MF</text>
<text x="810.70" y="153.30" font-size="6.3" textLength="24.10" lengthAdjust="spacingAndGlyphs" stroke="#111" stroke-width="0.40" transform="rotate(0.03 810.7 153.3)" >-C8_MF</text>
<line x1="678.70" y1="157.70" x2="692.30" y2="157.70" stroke="#333" stroke-width="1.0" />
<path d="M675.64 154.06 A3.7 3.7 0 0 1 675.64 161.34" stroke="#000" stroke-width="1.2" fill="none" />
<line x1="667.30" y1="157.70" x2="674.45" y2="157.70" stroke="#000" stroke-width="2.7" stroke-linecap="round"/>
<line x1="653.00" y1="157.70" x2="666.00" y2="157.70" stroke="#333" stroke-width="1.0" />
<text x="653.20" y="156.90" font-size="4.2" font-weight="bold" textLength="9.80" lengthAdjust="spacingAndGlyphs" fill="#000" stroke="#000" stroke-width="0.35" style="fill:#000" transform="rotate(0.03 653.2 156.9)">45M7</text>
<text x="683.30" y="156.90" font-size="4.2" font-weight="bold" textLength="9.70" lengthAdjust="spacingAndGlyphs" fill="#000" stroke="#000" stroke-width="0.35" style="fill:#000" transform="rotate(0.03 683.3 156.9)">45M7</text>
<text x="580.00" y="157.25" font-size="4.4" font-weight="bold" textLength="13.08" lengthAdjust="spacingAndGlyphs" fill="#000" stroke="#000" stroke-width="0.38" style="fill:#000" transform="rotate(0.03 580.0 157.2)">0.75 mm2</text>
<text x="598.42" y="157.25" font-size="4.4" font-weight="bold" textLength="8.28" lengthAdjust="spacingAndGlyphs" fill="#000" stroke="#000" stroke-width="0.38" style="fill:#000" transform="rotate(0.03 598.4 157.2)">4017</text>
<line x1="592.68" y1="160.30" x2="597.09" y2="155.30" stroke="#101058" stroke-width="1.1" />
<text x="736.70" y="157.25" font-size="4.4" font-weight="bold" textLength="12.89" lengthAdjust="spacingAndGlyphs" fill="#000" stroke="#000" stroke-width="0.38" style="fill:#000" transform="rotate(0.03 736.7 157.2)">0.75 mm2</text>
<text x="754.85" y="157.25" font-size="4.4" font-weight="bold" textLength="8.15" lengthAdjust="spacingAndGlyphs" fill="#000" stroke="#000" stroke-width="0.38" style="fill:#000" transform="rotate(0.03 754.8 157.2)">4017</text>
<line x1="749.19" y1="160.30" x2="753.53" y2="155.30" stroke="#101058" stroke-width="1.1" />
<text x="632.00" y="170.80" font-size="6.3" textLength="23.90" lengthAdjust="spacingAndGlyphs" stroke="#111" stroke-width="0.40" transform="rotate(0.03 632.0 170.8)" >-C2_CB</text>
<text x="690.40" y="170.30" font-size="6.3" textLength="23.60" lengthAdjust="spacingAndGlyphs" stroke="#111" stroke-width="0.40" transform="rotate(0.03 690.4 170.3)" >-C2_MF</text>
<text x="810.70" y="170.60" font-size="6.3" textLength="24.10" lengthAdjust="spacingAndGlyphs" stroke="#111" stroke-width="0.40" transform="rotate(0.03 810.7 170.6)" >-C8_MF</text>
<line x1="678.70" y1="175.10" x2="692.30" y2="175.10" stroke="#333" stroke-width="1.0" />
<path d="M675.64 171.46 A3.7 3.7 0 0 1 675.64 178.74" stroke="#000" stroke-width="1.2" fill="none" />
<line x1="667.30" y1="175.10" x2="674.45" y2="175.10" stroke="#000" stroke-width="2.7" stroke-linecap="round"/>
<line x1="653.00" y1="175.10" x2="666.00" y2="175.10" stroke="#333" stroke-width="1.0" />
<text x="653.20" y="174.30" font-size="4.2" font-weight="bold" textLength="9.80" lengthAdjust="spacingAndGlyphs" fill="#000" stroke="#000" stroke-width="0.35" style="fill:#000" transform="rotate(0.03 653.2 174.3)">44M7</text>
<text x="683.30" y="174.30" font-size="4.2" font-weight="bold" textLength="9.70" lengthAdjust="spacingAndGlyphs" fill="#000" stroke="#000" stroke-width="0.35" style="fill:#000" transform="rotate(0.03 683.3 174.3)">44M7</text>
<text x="580.00" y="174.65" font-size="4.4" font-weight="bold" textLength="13.08" lengthAdjust="spacingAndGlyphs" fill="#000" stroke="#000" stroke-width="0.38" style="fill:#000" transform="rotate(0.03 580.0 174.7)">0.75 mm2</text>
<text x="598.42" y="174.65" font-size="4.4" font-weight="bold" textLength="8.28" lengthAdjust="spacingAndGlyphs" fill="#000" stroke="#000" stroke-width="0.38" style="fill:#000" transform="rotate(0.03 598.4 174.7)">4016</text>
<line x1="592.68" y1="177.70" x2="597.09" y2="172.70" stroke="#101058" stroke-width="1.1" />
<text x="736.70" y="174.65" font-size="4.4" font-weight="bold" textLength="12.89" lengthAdjust="spacingAndGlyphs" fill="#000" stroke="#000" stroke-width="0.38" style="fill:#000" transform="rotate(0.03 736.7 174.7)">0.75 mm2</text>
<text x="754.85" y="174.65" font-size="4.4" font-weight="bold" textLength="8.15" lengthAdjust="spacingAndGlyphs" fill="#000" stroke="#000" stroke-width="0.38" style="fill:#000" transform="rotate(0.03 754.8 174.7)">4016</text>
<line x1="749.19" y1="177.70" x2="753.53" y2="172.70" stroke="#101058" stroke-width="1.1" />
<line x1="832.00" y1="157.70" x2="845.80" y2="157.70" stroke="#333" stroke-width="1.0" />
<path d="M848.86 154.06 A3.7 3.7 0 0 0 848.86 161.34" stroke="#000" stroke-width="1.2" fill="none" />
<line x1="850.05" y1="157.70" x2="860.90" y2="157.70" stroke="#000" stroke-width="2.7" stroke-linecap="round"/>
<text x="832.20" y="157.10" font-size="4.2" font-weight="bold" textLength="8.60" lengthAdjust="spacingAndGlyphs" fill="#000" stroke="#000" stroke-width="0.35" style="fill:#000" transform="rotate(0.03 832.2 157.1)">12/C6</text>
<text x="864.80" y="157.20" font-size="4.2" font-weight="bold" textLength="9.10" lengthAdjust="spacingAndGlyphs" fill="#000" stroke="#000" stroke-width="0.35" style="fill:#000" transform="rotate(0.03 864.8 157.2)">12/C6</text>
<line x1="863.80" y1="157.70" x2="874.90" y2="157.70" stroke="#000" stroke-width="0.9" />
<text x="884.00" y="157.70" font-size="6.3" textLength="85.00" lengthAdjust="spacingAndGlyphs" stroke="#111" stroke-width="0.30" transform="rotate(0.03 884.0 157.7)" >AI 6 / BRAKE PEDAL SIG A</text>
<line x1="832.00" y1="175.10" x2="845.80" y2="175.10" stroke="#333" stroke-width="1.0" />
<path d="M848.86 171.46 A3.7 3.7 0 0 0 848.86 178.74" stroke="#000" stroke-width="1.2" fill="none" />
<line x1="850.05" y1="175.10" x2="860.90" y2="175.10" stroke="#000" stroke-width="2.7" stroke-linecap="round"/>
<text x="832.20" y="174.50" font-size="4.2" font-weight="bold" textLength="8.60" lengthAdjust="spacingAndGlyphs" fill="#000" stroke="#000" stroke-width="0.35" style="fill:#000" transform="rotate(0.03 832.2 174.5)">11/C6</text>
<text x="864.80" y="174.60" font-size="4.2" font-weight="bold" textLength="9.10" lengthAdjust="spacingAndGlyphs" fill="#000" stroke="#000" stroke-width="0.35" style="fill:#000" transform="rotate(0.03 864.8 174.6)">11/C6</text>
<line x1="863.80" y1="175.10" x2="874.90" y2="175.10" stroke="#000" stroke-width="0.9" />
<text x="884.00" y="174.70" font-size="6.3" textLength="86.80" lengthAdjust="spacingAndGlyphs" stroke="#111" stroke-width="0.30" transform="rotate(0.03 884.0 174.7)" >AI 7 / BRAKE PEDAL SI G B</text>
<line x1="832.00" y1="427.46" x2="845.80" y2="427.46" stroke="#333" stroke-width="1.0" />
<path d="M848.86 423.82 A3.7 3.7 0 0 0 848.86 431.10" stroke="#000" stroke-width="1.2" fill="none" />
<line x1="850.05" y1="427.46" x2="860.90" y2="427.46" stroke="#000" stroke-width="2.7" stroke-linecap="round"/>
<text x="832.20" y="426.86" font-size="4.2" font-weight="bold" textLength="8.60" lengthAdjust="spacingAndGlyphs" fill="#000" stroke="#000" stroke-width="0.35" style="fill:#000" transform="rotate(0.03 832.2 426.9)">13/D4</text>
<text x="864.80" y="426.96" font-size="4.2" font-weight="bold" textLength="9.10" lengthAdjust="spacingAndGlyphs" fill="#000" stroke="#000" stroke-width="0.35" style="fill:#000" transform="rotate(0.03 864.8 427.0)">13/D4</text>
<line x1="863.80" y1="427.46" x2="874.90" y2="427.46" stroke="#000" stroke-width="0.9" />
<text x="886.00" y="428.56" font-size="6.3" textLength="83.00" lengthAdjust="spacingAndGlyphs" stroke="#111" stroke-width="0.30" transform="rotate(0.03 886.0 428.6)" >DI 11 / AXLE TRANS SIG 1</text>
<line x1="832.00" y1="479.54" x2="845.80" y2="479.54" stroke="#333" stroke-width="1.0" />
<path d="M848.86 475.90 A3.7 3.7 0 0 0 848.86 483.18" stroke="#000" stroke-width="1.2" fill="none" />
<line x1="850.05" y1="479.54" x2="860.90" y2="479.54" stroke="#000" stroke-width="2.7" stroke-linecap="round"/>
<text x="832.20" y="478.94" font-size="4.2" font-weight="bold" textLength="8.60" lengthAdjust="spacingAndGlyphs" fill="#000" stroke="#000" stroke-width="0.35" style="fill:#000" transform="rotate(0.03 832.2 478.9)">29/D4</text>
<text x="864.80" y="479.04" font-size="4.2" font-weight="bold" textLength="9.10" lengthAdjust="spacingAndGlyphs" fill="#000" stroke="#000" stroke-width="0.35" style="fill:#000" transform="rotate(0.03 864.8 479.0)">29/D4</text>
<line x1="863.80" y1="479.54" x2="874.90" y2="479.54" stroke="#000" stroke-width="0.9" />
<text x="886.00" y="479.54" font-size="6.3" textLength="83.00" lengthAdjust="spacingAndGlyphs" stroke="#111" stroke-width="0.30" transform="rotate(0.03 886.0 479.5)" >DI 12 / AXLE TRANS SIG 2</text>
<line x1="832.00" y1="583.80" x2="845.80" y2="583.80" stroke="#333" stroke-width="1.0" />
<path d="M848.86 580.16 A3.7 3.7 0 0 0 848.86 587.44" stroke="#000" stroke-width="1.2" fill="none" />
<line x1="850.05" y1="583.80" x2="860.90" y2="583.80" stroke="#000" stroke-width="2.7" stroke-linecap="round"/>
<text x="832.20" y="583.20" font-size="4.2" font-weight="bold" textLength="8.60" lengthAdjust="spacingAndGlyphs" fill="#000" stroke="#000" stroke-width="0.35" style="fill:#000" transform="rotate(0.03 832.2 583.2)">16/D4</text>
<text x="864.80" y="583.30" font-size="4.2" font-weight="bold" textLength="9.10" lengthAdjust="spacingAndGlyphs" fill="#000" stroke="#000" stroke-width="0.35" style="fill:#000" transform="rotate(0.03 864.8 583.3)">16/D4</text>
<line x1="863.80" y1="583.80" x2="874.90" y2="583.80" stroke="#000" stroke-width="0.9" />
<text x="885.00" y="583.50" font-size="6.3" textLength="103.00" lengthAdjust="spacingAndGlyphs" stroke="#111" stroke-width="0.30" transform="rotate(0.03 885.0 583.5)" >DI 13 / BOOM EXTENSION SIG A</text>
<line x1="832.00" y1="592.60" x2="845.80" y2="592.60" stroke="#333" stroke-width="1.0" />
<path d="M848.86 588.96 A3.7 3.7 0 0 0 848.86 596.24" stroke="#000" stroke-width="1.2" fill="none" />
<line x1="850.05" y1="592.60" x2="860.90" y2="592.60" stroke="#000" stroke-width="2.7" stroke-linecap="round"/>
<text x="832.20" y="592.00" font-size="4.2" font-weight="bold" textLength="8.60" lengthAdjust="spacingAndGlyphs" fill="#000" stroke="#000" stroke-width="0.35" style="fill:#000" transform="rotate(0.03 832.2 592.0)">34/D4</text>
<text x="864.80" y="592.10" font-size="4.2" font-weight="bold" textLength="9.10" lengthAdjust="spacingAndGlyphs" fill="#000" stroke="#000" stroke-width="0.35" style="fill:#000" transform="rotate(0.03 864.8 592.1)">34/D4</text>
<line x1="863.80" y1="592.60" x2="874.90" y2="592.60" stroke="#000" stroke-width="0.9" />
<text x="885.00" y="592.50" font-size="6.3" textLength="103.00" lengthAdjust="spacingAndGlyphs" stroke="#111" stroke-width="0.30" transform="rotate(0.03 885.0 592.5)" >DI 14 / BOOM EXTENSION SIG B</text>
<line x1="832.00" y1="706.10" x2="845.80" y2="706.10" stroke="#333" stroke-width="1.0" />
<path d="M848.86 702.46 A3.7 3.7 0 0 0 848.86 709.74" stroke="#000" stroke-width="1.2" fill="none" />
<line x1="850.05" y1="706.10" x2="860.90" y2="706.10" stroke="#000" stroke-width="2.7" stroke-linecap="round"/>
<text x="832.20" y="705.50" font-size="4.2" font-weight="bold" textLength="8.60" lengthAdjust="spacingAndGlyphs" fill="#000" stroke="#000" stroke-width="0.35" style="fill:#000" transform="rotate(0.03 832.2 705.5)">23/C6</text>
<text x="864.80" y="705.60" font-size="4.2" font-weight="bold" textLength="9.10" lengthAdjust="spacingAndGlyphs" fill="#000" stroke="#000" stroke-width="0.35" style="fill:#000" transform="rotate(0.03 864.8 705.6)">23/C6</text>
<line x1="863.80" y1="706.10" x2="874.90" y2="706.10" stroke="#000" stroke-width="0.9" />
<text x="877.60" y="705.50" font-size="6.3" textLength="68.00" lengthAdjust="spacingAndGlyphs" stroke="#111" stroke-width="0.30" transform="rotate(0.03 877.6 705.5)" >SENSOR VOLTAGE 1</text>
<line x1="832.00" y1="775.70" x2="845.80" y2="775.70" stroke="#333" stroke-width="1.0" />
<path d="M848.86 772.06 A3.7 3.7 0 0 0 848.86 779.34" stroke="#000" stroke-width="1.2" fill="none" />
<line x1="850.05" y1="775.70" x2="860.90" y2="775.70" stroke="#000" stroke-width="2.7" stroke-linecap="round"/>
<text x="832.20" y="775.10" font-size="4.2" font-weight="bold" textLength="8.60" lengthAdjust="spacingAndGlyphs" fill="#000" stroke="#000" stroke-width="0.35" style="fill:#000" transform="rotate(0.03 832.2 775.1)">15/C6</text>
<text x="864.80" y="775.20" font-size="4.2" font-weight="bold" textLength="9.10" lengthAdjust="spacingAndGlyphs" fill="#000" stroke="#000" stroke-width="0.35" style="fill:#000" transform="rotate(0.03 864.8 775.2)">15/C6</text>
<line x1="863.80" y1="775.70" x2="874.90" y2="775.70" stroke="#000" stroke-width="0.9" />
<text x="880.60" y="775.50" font-size="6.3" textLength="44.80" lengthAdjust="spacingAndGlyphs" stroke="#111" stroke-width="0.30" transform="rotate(0.03 880.6 775.5)" >SENSOR GND</text>
<text x="796.00" y="419.30" font-size="6.3" textLength="27.00" lengthAdjust="spacingAndGlyphs" stroke="#111" stroke-width="0.40" transform="rotate(0.03 796.0 419.3)" >-C27_MF</text>
<text x="806.60" y="475.30" font-size="6.3" textLength="27.40" lengthAdjust="spacingAndGlyphs" stroke="#111" stroke-width="0.40" transform="rotate(0.03 806.6 475.3)" >-C27_MF</text>
<text x="806.60" y="580.30" font-size="6.3" textLength="27.40" lengthAdjust="spacingAndGlyphs" stroke="#111" stroke-width="0.40" transform="rotate(0.03 806.6 580.3)" >-C27_MF</text>
<text x="806.60" y="600.90" font-size="6.3" textLength="27.40" lengthAdjust="spacingAndGlyphs" stroke="#111" stroke-width="0.40" transform="rotate(0.03 806.6 600.9)" >-C27_MF</text>
<text x="810.60" y="702.30" font-size="6.3" textLength="23.40" lengthAdjust="spacingAndGlyphs" stroke="#111" stroke-width="0.40" transform="rotate(0.03 810.6 702.3)" >-C8_MF</text>
<text x="810.60" y="770.90" font-size="6.3" textLength="23.40" lengthAdjust="spacingAndGlyphs" stroke="#111" stroke-width="0.40" transform="rotate(0.03 810.6 770.9)" >-C8_MF</text>
<text x="513.00" y="409.90" font-size="6.3" textLength="14.80" lengthAdjust="spacingAndGlyphs" stroke="#111" stroke-width="0.30" transform="rotate(0.03 513.0 409.9)" >GND</text>
<text x="511.60" y="427.26" font-size="6.3" textLength="16.60" lengthAdjust="spacingAndGlyphs" stroke="#111" stroke-width="0.30" transform="rotate(0.03 511.6 427.3)" >SIG 1</text>
<text x="516.00" y="444.62" font-size="6.3" textLength="11.30" lengthAdjust="spacingAndGlyphs" stroke="#111" stroke-width="0.30" transform="rotate(0.03 516.0 444.6)" >IGN</text>
<text x="516.00" y="461.98" font-size="6.3" textLength="11.30" lengthAdjust="spacingAndGlyphs" stroke="#111" stroke-width="0.30" transform="rotate(0.03 516.0 462.0)" >IGN</text>
<text x="510.30" y="479.34" font-size="6.3" textLength="17.30" lengthAdjust="spacingAndGlyphs" stroke="#111" stroke-width="0.30" transform="rotate(0.03 510.3 479.3)" >SIG 2</text>
<text x="513.00" y="496.70" font-size="6.3" textLength="14.80" lengthAdjust="spacingAndGlyphs" stroke="#111" stroke-width="0.30" transform="rotate(0.03 513.0 496.7)" >GND</text>
<line x1="467.80" y1="410.10" x2="479.80" y2="410.10" stroke="#333" stroke-width="1.0" />
<path d="M482.86 406.46 A3.7 3.7 0 0 0 482.86 413.74" stroke="#000" stroke-width="1.2" fill="none" />
<line x1="484.05" y1="410.10" x2="495.50" y2="410.10" stroke="#000" stroke-width="2.7" stroke-linecap="round"/>
<text x="498.50" y="409.60" font-size="4.2" font-weight="bold" textLength="6.30" lengthAdjust="spacingAndGlyphs" fill="#000" stroke="#000" stroke-width="0.35" style="fill:#000" transform="rotate(0.03 498.5 409.6)">1/6</text>
<line x1="497.50" y1="410.10" x2="505.80" y2="410.10" stroke="#000" stroke-width="0.9" />
<text x="467.50" y="409.20" font-size="4.2" font-weight="bold" textLength="5.30" lengthAdjust="spacingAndGlyphs" fill="#000" stroke="#000" stroke-width="0.35" style="fill:#000" transform="rotate(0.03 467.5 409.2)">1/6</text>
<line x1="467.80" y1="444.82" x2="479.80" y2="444.82" stroke="#333" stroke-width="1.0" />
<path d="M482.86 441.18 A3.7 3.7 0 0 0 482.86 448.46" stroke="#000" stroke-width="1.2" fill="none" />
<line x1="484.05" y1="444.82" x2="495.50" y2="444.82" stroke="#000" stroke-width="2.7" stroke-linecap="round"/>
<text x="498.50" y="444.32" font-size="4.2" font-weight="bold" textLength="6.30" lengthAdjust="spacingAndGlyphs" fill="#000" stroke="#000" stroke-width="0.35" style="fill:#000" transform="rotate(0.03 498.5 444.3)">3/6</text>
<line x1="497.50" y1="444.82" x2="505.80" y2="444.82" stroke="#000" stroke-width="0.9" />
<text x="467.50" y="443.92" font-size="4.2" font-weight="bold" textLength="5.30" lengthAdjust="spacingAndGlyphs" fill="#000" stroke="#000" stroke-width="0.35" style="fill:#000" transform="rotate(0.03 467.5 443.9)">3/6</text>
<line x1="467.80" y1="462.18" x2="479.80" y2="462.18" stroke="#333" stroke-width="1.0" />
<path d="M482.86 458.54 A3.7 3.7 0 0 0 482.86 465.82" stroke="#000" stroke-width="1.2" fill="none" />
<line x1="484.05" y1="462.18" x2="495.50" y2="462.18" stroke="#000" stroke-width="2.7" stroke-linecap="round"/>
<text x="498.50" y="461.68" font-size="4.2" font-weight="bold" textLength="6.30" lengthAdjust="spacingAndGlyphs" fill="#000" stroke="#000" stroke-width="0.35" style="fill:#000" transform="rotate(0.03 498.5 461.7)">4/6</text>
<line x1="497.50" y1="462.18" x2="505.80" y2="462.18" stroke="#000" stroke-width="0.9" />
<text x="467.50" y="461.28" font-size="4.2" font-weight="bold" textLength="5.30" lengthAdjust="spacingAndGlyphs" fill="#000" stroke="#000" stroke-width="0.35" style="fill:#000" transform="rotate(0.03 467.5 461.3)">4/6</text>
<line x1="467.80" y1="496.90" x2="479.80" y2="496.90" stroke="#333" stroke-width="1.0" />
<path d="M482.86 493.26 A3.7 3.7 0 0 0 482.86 500.54" stroke="#000" stroke-width="1.2" fill="none" />
<line x1="484.05" y1="496.90" x2="495.50" y2="496.90" stroke="#000" stroke-width="2.7" stroke-linecap="round"/>
<text x="498.50" y="496.40" font-size="4.2" font-weight="bold" textLength="6.30" lengthAdjust="spacingAndGlyphs" fill="#000" stroke="#000" stroke-width="0.35" style="fill:#000" transform="rotate(0.03 498.5 496.4)">6/6</text>
<line x1="497.50" y1="496.90" x2="505.80" y2="496.90" stroke="#000" stroke-width="0.9" />
<text x="467.50" y="496.00" font-size="4.2" font-weight="bold" textLength="5.30" lengthAdjust="spacingAndGlyphs" fill="#000" stroke="#000" stroke-width="0.35" style="fill:#000" transform="rotate(0.03 467.5 496.0)">6/6</text>
<text x="532.80" y="426.96" font-size="4.2" font-weight="bold" textLength="5.80" lengthAdjust="spacingAndGlyphs" fill="#000" stroke="#000" stroke-width="0.35" style="fill:#000" transform="rotate(0.03 532.8 427.0)">2/6</text>
<line x1="531.80" y1="427.46" x2="539.60" y2="427.46" stroke="#000" stroke-width="0.9" />
<line x1="557.00" y1="427.46" x2="571.00" y2="427.46" stroke="#333" stroke-width="1.0" />
<path d="M553.94 423.82 A3.7 3.7 0 0 1 553.94 431.10" stroke="#000" stroke-width="1.2" fill="none" />
<line x1="542.10" y1="427.46" x2="552.75" y2="427.46" stroke="#000" stroke-width="2.7" stroke-linecap="round"/>
<text x="566.50" y="426.56" font-size="4.2" font-weight="bold" textLength="5.00" lengthAdjust="spacingAndGlyphs" fill="#000" stroke="#000" stroke-width="0.35" style="fill:#000" transform="rotate(0.03 566.5 426.6)">2/6</text>
<text x="532.80" y="479.04" font-size="4.2" font-weight="bold" textLength="5.80" lengthAdjust="spacingAndGlyphs" fill="#000" stroke="#000" stroke-width="0.35" style="fill:#000" transform="rotate(0.03 532.8 479.0)">5/6</text>
<line x1="531.80" y1="479.54" x2="539.60" y2="479.54" stroke="#000" stroke-width="0.9" />
<line x1="557.00" y1="479.54" x2="571.00" y2="479.54" stroke="#333" stroke-width="1.0" />
<path d="M553.94 475.90 A3.7 3.7 0 0 1 553.94 483.18" stroke="#000" stroke-width="1.2" fill="none" />
<line x1="542.10" y1="479.54" x2="552.75" y2="479.54" stroke="#000" stroke-width="2.7" stroke-linecap="round"/>
<text x="566.50" y="478.64" font-size="4.2" font-weight="bold" textLength="5.00" lengthAdjust="spacingAndGlyphs" fill="#000" stroke="#000" stroke-width="0.35" style="fill:#000" transform="rotate(0.03 566.5 478.6)">5/6</text>
<text x="441.00" y="406.10" font-size="6.3" textLength="28.00" lengthAdjust="spacingAndGlyphs" stroke="#111" stroke-width="0.40" transform="rotate(0.03 441.0 406.1)" >-C36_MF</text>
<text x="568.40" y="423.00" font-size="6.3" textLength="28.30" lengthAdjust="spacingAndGlyphs" stroke="#111" stroke-width="0.40" transform="rotate(0.03 568.4 423.0)" >-C36_MF</text>
<text x="276.00" y="409.65" font-size="4.4" font-weight="bold" textLength="14.41" lengthAdjust="spacingAndGlyphs" fill="#000" stroke="#000" stroke-width="0.38" style="fill:#000" transform="rotate(0.03 276.0 409.7)">0.50 mm2</text>
<text x="296.29" y="409.65" font-size="4.4" font-weight="bold" textLength="9.11" lengthAdjust="spacingAndGlyphs" fill="#000" stroke="#000" stroke-width="0.38" style="fill:#000" transform="rotate(0.03 296.3 409.7)">600A</text>
<line x1="289.96" y1="412.70" x2="294.82" y2="407.70" stroke="#101058" stroke-width="1.1" />
<text x="407.00" y="409.65" font-size="4.4" font-weight="bold" textLength="13.23" lengthAdjust="spacingAndGlyphs" fill="#000" stroke="#000" stroke-width="0.38" style="fill:#000" transform="rotate(0.03 407.0 409.7)">0.50 mm2</text>
<text x="425.63" y="409.65" font-size="4.4" font-weight="bold" textLength="8.37" lengthAdjust="spacingAndGlyphs" fill="#000" stroke="#000" stroke-width="0.38" style="fill:#000" transform="rotate(0.03 425.6 409.7)">600</text>
<line x1="419.82" y1="412.70" x2="424.28" y2="407.70" stroke="#101058" stroke-width="1.1" />
<text x="276.00" y="444.37" font-size="4.4" font-weight="bold" textLength="14.41" lengthAdjust="spacingAndGlyphs" fill="#000" stroke="#000" stroke-width="0.38" style="fill:#000" transform="rotate(0.03 276.0 444.4)">0.75 mm2</text>
<text x="296.29" y="444.37" font-size="4.4" font-weight="bold" textLength="9.11" lengthAdjust="spacingAndGlyphs" fill="#000" stroke="#000" stroke-width="0.38" style="fill:#000" transform="rotate(0.03 296.3 444.4)">1016G</text>
<line x1="289.96" y1="447.42" x2="294.82" y2="442.42" stroke="#101058" stroke-width="1.1" />
<text x="389.00" y="444.37" font-size="4.4" font-weight="bold" textLength="15.58" lengthAdjust="spacingAndGlyphs" fill="#000" stroke="#000" stroke-width="0.38" style="fill:#000" transform="rotate(0.03 389.0 444.4)">0.50 mm2</text>
<text x="410.94" y="444.37" font-size="4.4" font-weight="bold" textLength="9.86" lengthAdjust="spacingAndGlyphs" fill="#000" stroke="#000" stroke-width="0.38" style="fill:#000" transform="rotate(0.03 410.9 444.4)">1016GA</text>
<line x1="404.11" y1="447.42" x2="409.35" y2="442.42" stroke="#101058" stroke-width="1.1" />
<text x="389.00" y="461.73" font-size="4.4" font-weight="bold" textLength="15.58" lengthAdjust="spacingAndGlyphs" fill="#000" stroke="#000" stroke-width="0.38" style="fill:#000" transform="rotate(0.03 389.0 461.7)">0.50 mm2</text>
<text x="410.94" y="461.73" font-size="4.4" font-weight="bold" textLength="9.86" lengthAdjust="spacingAndGlyphs" fill="#000" stroke="#000" stroke-width="0.38" style="fill:#000" transform="rotate(0.03 410.9 461.7)">1016GB</text>
<line x1="404.11" y1="464.78" x2="409.35" y2="459.78" stroke="#101058" stroke-width="1.1" />
<text x="397.70" y="496.45" font-size="4.4" font-weight="bold" textLength="14.70" lengthAdjust="spacingAndGlyphs" fill="#000" stroke="#000" stroke-width="0.38" style="fill:#000" transform="rotate(0.03 397.7 496.5)">0.50 mm2</text>
<text x="418.40" y="496.45" font-size="4.4" font-weight="bold" textLength="9.30" lengthAdjust="spacingAndGlyphs" fill="#000" stroke="#000" stroke-width="0.38" style="fill:#000" transform="rotate(0.03 418.4 496.5)">600B</text>
<line x1="411.95" y1="499.50" x2="416.90" y2="494.50" stroke="#101058" stroke-width="1.1" />
<text x="667.70" y="427.01" font-size="4.4" font-weight="bold" textLength="13.38" lengthAdjust="spacingAndGlyphs" fill="#000" stroke="#000" stroke-width="0.38" style="fill:#000" transform="rotate(0.03 667.7 427.0)">0.50 mm2</text>
<text x="686.54" y="427.01" font-size="4.4" font-weight="bold" textLength="8.46" lengthAdjust="spacingAndGlyphs" fill="#000" stroke="#000" stroke-width="0.38" style="fill:#000" transform="rotate(0.03 686.5 427.0)">4183</text>
<line x1="680.67" y1="430.06" x2="685.17" y2="425.06" stroke="#101058" stroke-width="1.1" />
<text x="675.80" y="479.09" font-size="4.4" font-weight="bold" textLength="13.57" lengthAdjust="spacingAndGlyphs" fill="#000" stroke="#000" stroke-width="0.38" style="fill:#000" transform="rotate(0.03 675.8 479.1)">0.50 mm2</text>
<text x="694.91" y="479.09" font-size="4.4" font-weight="bold" textLength="8.59" lengthAdjust="spacingAndGlyphs" fill="#000" stroke="#000" stroke-width="0.38" style="fill:#000" transform="rotate(0.03 694.9 479.1)">4184</text>
<line x1="688.96" y1="482.14" x2="693.53" y2="477.14" stroke="#101058" stroke-width="1.1" />
<text x="360.75" y="393.49" font-size="6.0" font-weight="bold" textLength="19.50" lengthAdjust="spacingAndGlyphs" stroke="#111" stroke-width="0.12" transform="rotate(0.03 360.8 393.5)" >-S24_MF</text>
<text x="348.00" y="400.79" font-size="6.0" font-weight="bold" textLength="45.00" lengthAdjust="spacingAndGlyphs" stroke="#111" stroke-width="0.12" transform="rotate(0.03 348.0 400.8)" >TRANSDUCER GND</text>
<text x="317.55" y="428.09" font-size="6.0" font-weight="bold" textLength="19.50" lengthAdjust="spacingAndGlyphs" stroke="#111" stroke-width="0.12" transform="rotate(0.03 317.6 428.1)" >-S25_MF</text>
<text x="305.85" y="436.09" font-size="6.0" font-weight="bold" textLength="43.30" lengthAdjust="spacingAndGlyphs" stroke="#111" stroke-width="0.12" transform="rotate(0.03 305.9 436.1)" >TRANSDUCER IGN</text>
<text x="508.65" y="714.89" font-size="6.0" font-weight="bold" textLength="19.50" lengthAdjust="spacingAndGlyphs" stroke="#111" stroke-width="0.12" transform="rotate(0.03 508.6 714.9)" >-S16_MF</text>
<text x="492.25" y="721.19" font-size="6.0" font-weight="bold" textLength="51.50" lengthAdjust="spacingAndGlyphs" stroke="#111" stroke-width="0.12" transform="rotate(0.03 492.2 721.2)" >HYD SENSOR SUPPLY</text>
<text x="508.65" y="784.19" font-size="6.0" font-weight="bold" textLength="19.50" lengthAdjust="spacingAndGlyphs" stroke="#111" stroke-width="0.12" transform="rotate(0.03 508.6 784.2)" >-S11_MF</text>
<text x="494.60" y="791.09" font-size="6.0" font-weight="bold" textLength="47.60" lengthAdjust="spacingAndGlyphs" stroke="#111" stroke-width="0.12" transform="rotate(0.03 494.6 791.1)" >HYDR SENSOR GND</text>
<text x="174.30" y="413.09" font-size="6.0" font-weight="bold" textLength="24.90" lengthAdjust="spacingAndGlyphs" stroke="#111" stroke-width="0.12" transform="rotate(0.03 174.3 413.1)" >-S30_MF:S</text>
<text x="203.40" y="412.96" font-size="6.2" textLength="18.40" lengthAdjust="spacingAndGlyphs" fill="#2c8c40" font-style="italic" stroke="#2c8c40" stroke-width="0.30" transform="rotate(0.03 203.4 413.0)" style="fill:#2c8c40">/18.E4</text>
<path d="M231.4 408.1 L231.4 412.1 L223.4 410.1 Z" stroke="#111" stroke-width="1.1" fill="none" stroke-linejoin="miter"/>
<line x1="231.40" y1="410.10" x2="239.90" y2="410.10" stroke="#4a3a40" stroke-width="1.1" />
<text x="185.80" y="448.21" font-size="6.0" font-weight="bold" textLength="23.80" lengthAdjust="spacingAndGlyphs" stroke="#111" stroke-width="0.12" transform="rotate(0.03 185.8 448.2)" >-C2_MF:46</text>
<text x="214.20" y="448.08" font-size="6.2" textLength="16.20" lengthAdjust="spacingAndGlyphs" fill="#2c8c40" font-style="italic" stroke="#2c8c40" stroke-width="0.30" transform="rotate(0.03 214.2 448.1)" style="fill:#2c8c40">/7.D3</text>
<path d="M231.6 442.6 L231.6 447.0 L238.4 444.8 Z" stroke="#111" stroke-width="1.1" fill="none" stroke-linejoin="miter"/>
<line x1="238.40" y1="444.82" x2="247.90" y2="444.82" stroke="#4a3a40" stroke-width="1.1" />
<text x="239.80" y="442.73" font-size="4.2" textLength="17.20" lengthAdjust="spacingAndGlyphs" fill="#4a7ce0" stroke="#4a7ce0" stroke-width="0.25" transform="rotate(0.03 239.8 442.7)" style="fill:#4a7ce0">#121 IGN</text>
<text x="38.00" y="595.99" font-size="6.0" font-weight="bold" textLength="24.00" lengthAdjust="spacingAndGlyphs" stroke="#111" stroke-width="0.12" transform="rotate(0.03 38.0 596.0)" >-S36_CB:S</text>
<text x="66.90" y="595.86" font-size="6.2" textLength="15.10" lengthAdjust="spacingAndGlyphs" fill="#2c8c40" font-style="italic" stroke="#2c8c40" stroke-width="0.30" transform="rotate(0.03 66.9 595.9)" style="fill:#2c8c40">/3.D7</text>
<path d="M83.6 590.5 L83.6 594.9 L90.4 592.7 Z" stroke="#111" stroke-width="1.1" fill="none" stroke-linejoin="miter"/>
<line x1="90.40" y1="592.70" x2="99.90" y2="592.70" stroke="#4a3a40" stroke-width="1.1" />
<text x="89.00" y="590.73" font-size="4.2" textLength="16.00" lengthAdjust="spacingAndGlyphs" fill="#4a7ce0" stroke="#4a7ce0" stroke-width="0.25" transform="rotate(0.03 89.0 590.7)" style="fill:#4a7ce0">#121 IGN</text>
<text x="17.80" y="605.09" font-size="6.0" font-weight="bold" textLength="26.40" lengthAdjust="spacingAndGlyphs" stroke="#111" stroke-width="0.12" transform="rotate(0.03 17.8 605.1)" >FUSE FA11</text>
<text x="102.00" y="778.39" font-size="6.0" font-weight="bold" textLength="27.60" lengthAdjust="spacingAndGlyphs" stroke="#111" stroke-width="0.12" transform="rotate(0.03 102.0 778.4)" >-RES2_MF:2</text>
<text x="136.40" y="778.26" font-size="6.2" textLength="15.60" lengthAdjust="spacingAndGlyphs" fill="#2c8c40" font-style="italic" stroke="#2c8c40" stroke-width="0.30" transform="rotate(0.03 136.4 778.3)" style="fill:#2c8c40">/7.A7</text>
<path d="M162.0 773.7 L162.0 777.7 L154.0 775.7 Z" stroke="#111" stroke-width="1.1" fill="none" stroke-linejoin="miter"/>
<line x1="162.00" y1="775.70" x2="170.50" y2="775.70" stroke="#4a3a40" stroke-width="1.1" />
<text x="164.00" y="773.73" font-size="4.2" textLength="11.00" lengthAdjust="spacingAndGlyphs" fill="#4a7ce0" stroke="#4a7ce0" stroke-width="0.25" transform="rotate(0.03 164.0 773.7)" style="fill:#4a7ce0">#156</text>
<rect x="492.55" y="575.40" width="43.45" height="35.00" fill="#fff" stroke="#111" stroke-width="1.25" />
<text x="495.20" y="578.26" font-size="2.9" font-weight="bold" textLength="38.90" lengthAdjust="spacingAndGlyphs" fill="#e01818" stroke="#e01818" stroke-width="0.35" transform="rotate(0.03 495.2 578.3)" style="fill:#e01818">WARNING: SEE SCHEMATIC</text>
<text x="498.20" y="581.36" font-size="2.9" font-weight="bold" textLength="31.70" lengthAdjust="spacingAndGlyphs" fill="#e01818" stroke="#e01818" stroke-width="0.35" transform="rotate(0.03 498.2 581.4)" style="fill:#e01818">LAYOUT IS FUNCTIONAL</text>
<text x="498.60" y="565.13" font-size="6.4" textLength="31.00" lengthAdjust="spacingAndGlyphs" stroke="#111" stroke-width="0.40" transform="rotate(0.03 498.6 565.1)" >332/C8166</text>
<text x="468.85" y="570.73" font-size="6.4" textLength="90.50" lengthAdjust="spacingAndGlyphs" stroke="#111" stroke-width="0.40" transform="rotate(0.03 468.9 570.7)" >BOOM EXTENSION SWITCH</text>
<text x="457.80" y="584.90" font-size="6.3" textLength="27.60" lengthAdjust="spacingAndGlyphs" stroke="#111" stroke-width="0.40" transform="rotate(0.03 457.8 584.9)" >-C31_MF</text>
<text x="538.20" y="578.30" font-size="6.3" textLength="27.00" lengthAdjust="spacingAndGlyphs" stroke="#111" stroke-width="0.40" transform="rotate(0.03 538.2 578.3)" >-C31_MF</text>
<path d="M492.5 588.80 A3.8 4.0 0 0 0 492.5 596.80" stroke="#000" stroke-width="1.15" fill="none" />
<path d="M536.0 580.20 A3.9 4.0 0 0 1 536.0 588.20" stroke="#000" stroke-width="1.15" fill="none" />
<path d="M536.0 588.70 A3.9 4.0 0 0 1 536.0 596.70" stroke="#000" stroke-width="1.15" fill="none" />
<path d="M536.0 597.30 A3.9 4.0 0 0 1 536.0 605.30" stroke="#000" stroke-width="1.15" fill="none" />
<line x1="476.00" y1="592.70" x2="488.80" y2="592.70" stroke="#333" stroke-width="1.0" />
<text x="479.00" y="591.80" font-size="4.2" font-weight="bold" textLength="4.70" lengthAdjust="spacingAndGlyphs" fill="#000" stroke="#000" stroke-width="0.35" style="fill:#000" transform="rotate(0.03 479.0 591.8)">1/4</text>
<line x1="540.00" y1="583.80" x2="553.00" y2="583.80" stroke="#333" stroke-width="1.0" />
<text x="545.00" y="582.90" font-size="4.2" font-weight="bold" textLength="5.00" lengthAdjust="spacingAndGlyphs" fill="#000" stroke="#000" stroke-width="0.35" style="fill:#000" transform="rotate(0.03 545.0 582.9)">2/4</text>
<line x1="540.00" y1="592.60" x2="553.00" y2="592.60" stroke="#333" stroke-width="1.0" />
<text x="545.00" y="591.70" font-size="4.2" font-weight="bold" textLength="5.00" lengthAdjust="spacingAndGlyphs" fill="#000" stroke="#000" stroke-width="0.35" style="fill:#000" transform="rotate(0.03 545.0 591.7)">3/4</text>
<line x1="540.00" y1="601.20" x2="553.00" y2="601.20" stroke="#333" stroke-width="1.0" />
<text x="545.00" y="600.30" font-size="4.2" font-weight="bold" textLength="5.00" lengthAdjust="spacingAndGlyphs" fill="#000" stroke="#000" stroke-width="0.35" style="fill:#000" transform="rotate(0.03 545.0 600.3)">4/4</text>
<text x="495.00" y="590.97" font-size="5.4" font-weight="bold" stroke="#111" stroke-width="0.50" transform="rotate(0.03 495.0 591.0)" >1</text>
<line x1="495.20" y1="592.00" x2="502.70" y2="592.00" stroke="#000" stroke-width="0.9" />
<text x="497.60" y="591.60" font-size="2.6" font-weight="bold" textLength="5.10" lengthAdjust="spacingAndGlyphs" fill="#000" stroke="#000" stroke-width="0.3" style="fill:#000" transform="rotate(0.03 497.6 591.6)">Com</text>
<text x="495.20" y="596.20" font-size="3.0" font-weight="bold" textLength="7.50" lengthAdjust="spacingAndGlyphs" fill="#000" stroke="#000" stroke-width="0.35" style="fill:#000" transform="rotate(0.03 495.2 596.2)">(P/M)</text>
<text x="531.80" y="582.57" font-size="5.4" font-weight="bold" stroke="#111" stroke-width="0.50" transform="rotate(0.03 531.8 582.6)" >2</text>
<text x="531.80" y="591.07" font-size="5.4" font-weight="bold" stroke="#111" stroke-width="0.50" transform="rotate(0.03 531.8 591.1)" >3</text>
<text x="531.80" y="599.07" font-size="5.4" font-weight="bold" stroke="#111" stroke-width="0.50" transform="rotate(0.03 531.8 599.1)" >4</text>
<text x="523.50" y="584.90" font-size="3.0" font-weight="bold" textLength="6.40" lengthAdjust="spacingAndGlyphs" fill="#000" stroke="#000" stroke-width="0.35" style="fill:#000" transform="rotate(0.03 523.5 584.9)">N/O</text>
<text x="523.50" y="594.10" font-size="3.0" font-weight="bold" textLength="6.40" lengthAdjust="spacingAndGlyphs" fill="#000" stroke="#000" stroke-width="0.35" style="fill:#000" transform="rotate(0.03 523.5 594.1)">N/O</text>
<text x="523.50" y="601.00" font-size="3.0" font-weight="bold" textLength="6.40" lengthAdjust="spacingAndGlyphs" fill="#000" stroke="#000" stroke-width="0.35" style="fill:#000" transform="rotate(0.03 523.5 601.0)">N/C</text>
<text x="523.50" y="605.00" font-size="3.0" font-weight="bold" textLength="6.40" lengthAdjust="spacingAndGlyphs" fill="#000" stroke="#000" stroke-width="0.35" style="fill:#000" transform="rotate(0.03 523.5 605.0)">(P/E)</text>
<line x1="383.40" y1="592.70" x2="389.40" y2="592.70" stroke="#333" stroke-width="1.0" />
<path d="M380.34 589.06 A3.7 3.7 0 0 1 380.34 596.34" stroke="#000" stroke-width="1.2" fill="none" />
<line x1="370.20" y1="592.70" x2="379.15" y2="592.70" stroke="#000" stroke-width="2.7" stroke-linecap="round"/>
<line x1="356.00" y1="592.70" x2="370.00" y2="592.70" stroke="#333" stroke-width="1.0" />
<text x="357.50" y="591.90" font-size="4.2" font-weight="bold" textLength="10.00" lengthAdjust="spacingAndGlyphs" fill="#000" stroke="#000" stroke-width="0.35" style="fill:#000" transform="rotate(0.03 357.5 591.9)">33M7</text>
<text x="387.30" y="591.90" font-size="4.2" font-weight="bold" textLength="9.70" lengthAdjust="spacingAndGlyphs" fill="#000" stroke="#000" stroke-width="0.35" style="fill:#000" transform="rotate(0.03 387.3 591.9)">33M7</text>
<text x="347.40" y="584.30" font-size="6.3" textLength="23.60" lengthAdjust="spacingAndGlyphs" stroke="#111" stroke-width="0.40" transform="rotate(0.03 347.4 584.3)" >-C2_CB</text>
<text x="388.20" y="584.30" font-size="6.3" textLength="23.50" lengthAdjust="spacingAndGlyphs" stroke="#111" stroke-width="0.40" transform="rotate(0.03 388.2 584.3)" >-C2_MF</text>
<text x="189.00" y="592.25" font-size="4.4" font-weight="bold" textLength="13.72" lengthAdjust="spacingAndGlyphs" fill="#000" stroke="#000" stroke-width="0.38" style="fill:#000" transform="rotate(0.03 189.0 592.2)">0.75 mm2</text>
<text x="208.32" y="592.25" font-size="4.4" font-weight="bold" textLength="8.68" lengthAdjust="spacingAndGlyphs" fill="#000" stroke="#000" stroke-width="0.38" style="fill:#000" transform="rotate(0.03 208.3 592.2)">1013C</text>
<line x1="202.30" y1="595.30" x2="206.92" y2="590.30" stroke="#101058" stroke-width="1.1" />
<text x="415.40" y="592.25" font-size="4.4" font-weight="bold" textLength="14.41" lengthAdjust="spacingAndGlyphs" fill="#000" stroke="#000" stroke-width="0.38" style="fill:#000" transform="rotate(0.03 415.4 592.2)">0.75 mm2</text>
<text x="435.69" y="592.25" font-size="4.4" font-weight="bold" textLength="9.11" lengthAdjust="spacingAndGlyphs" fill="#000" stroke="#000" stroke-width="0.38" style="fill:#000" transform="rotate(0.03 435.7 592.2)">1013C</text>
<line x1="429.37" y1="595.30" x2="434.22" y2="590.30" stroke="#101058" stroke-width="1.1" />
<text x="415.40" y="618.45" font-size="4.4" font-weight="bold" textLength="14.41" lengthAdjust="spacingAndGlyphs" fill="#000" stroke="#000" stroke-width="0.38" style="fill:#000" transform="rotate(0.03 415.4 618.4)">0.50 mm2</text>
<text x="435.69" y="618.45" font-size="4.4" font-weight="bold" textLength="9.11" lengthAdjust="spacingAndGlyphs" fill="#000" stroke="#000" stroke-width="0.38" style="fill:#000" transform="rotate(0.03 435.7 618.4)">4013A</text>
<line x1="429.37" y1="621.50" x2="434.22" y2="616.50" stroke="#101058" stroke-width="1.1" />
<text x="581.00" y="583.35" font-size="4.4" font-weight="bold" textLength="12.74" lengthAdjust="spacingAndGlyphs" fill="#000" stroke="#000" stroke-width="0.38" style="fill:#000" transform="rotate(0.03 581.0 583.3)">0.50 mm2</text>
<text x="598.94" y="583.35" font-size="4.4" font-weight="bold" textLength="8.06" lengthAdjust="spacingAndGlyphs" fill="#000" stroke="#000" stroke-width="0.38" style="fill:#000" transform="rotate(0.03 598.9 583.3)">4014</text>
<line x1="593.35" y1="586.40" x2="597.64" y2="581.40" stroke="#101058" stroke-width="1.1" />
<text x="581.00" y="592.15" font-size="4.4" font-weight="bold" textLength="12.74" lengthAdjust="spacingAndGlyphs" fill="#000" stroke="#000" stroke-width="0.38" style="fill:#000" transform="rotate(0.03 581.0 592.1)">0.50 mm2</text>
<text x="598.94" y="592.15" font-size="4.4" font-weight="bold" textLength="8.06" lengthAdjust="spacingAndGlyphs" fill="#000" stroke="#000" stroke-width="0.38" style="fill:#000" transform="rotate(0.03 598.9 592.1)">4015</text>
<line x1="593.35" y1="595.20" x2="597.64" y2="590.20" stroke="#101058" stroke-width="1.1" />
<text x="581.00" y="600.75" font-size="4.4" font-weight="bold" textLength="12.74" lengthAdjust="spacingAndGlyphs" fill="#000" stroke="#000" stroke-width="0.38" style="fill:#000" transform="rotate(0.03 581.0 600.8)">0.50 mm2</text>
<text x="598.94" y="600.75" font-size="4.4" font-weight="bold" textLength="8.06" lengthAdjust="spacingAndGlyphs" fill="#000" stroke="#000" stroke-width="0.38" style="fill:#000" transform="rotate(0.03 598.9 600.8)">4013A</text>
<line x1="593.35" y1="603.80" x2="597.64" y2="598.80" stroke="#101058" stroke-width="1.1" />
<text x="737.00" y="583.35" font-size="4.4" font-weight="bold" textLength="12.74" lengthAdjust="spacingAndGlyphs" fill="#000" stroke="#000" stroke-width="0.38" style="fill:#000" transform="rotate(0.03 737.0 583.3)">0.50 mm2</text>
<text x="754.94" y="583.35" font-size="4.4" font-weight="bold" textLength="8.06" lengthAdjust="spacingAndGlyphs" fill="#000" stroke="#000" stroke-width="0.38" style="fill:#000" transform="rotate(0.03 754.9 583.3)">4014</text>
<line x1="749.35" y1="586.40" x2="753.64" y2="581.40" stroke="#101058" stroke-width="1.1" />
<text x="737.00" y="592.15" font-size="4.4" font-weight="bold" textLength="12.74" lengthAdjust="spacingAndGlyphs" fill="#000" stroke="#000" stroke-width="0.38" style="fill:#000" transform="rotate(0.03 737.0 592.1)">0.50 mm2</text>
<text x="754.94" y="592.15" font-size="4.4" font-weight="bold" textLength="8.06" lengthAdjust="spacingAndGlyphs" fill="#000" stroke="#000" stroke-width="0.38" style="fill:#000" transform="rotate(0.03 754.9 592.1)">4015</text>
<line x1="749.35" y1="595.20" x2="753.64" y2="590.20" stroke="#101058" stroke-width="1.1" />
<text x="310.40" y="679.55" font-size="4.4" font-weight="bold" textLength="14.01" lengthAdjust="spacingAndGlyphs" fill="#000" stroke="#000" stroke-width="0.38" style="fill:#000" transform="rotate(0.03 310.4 679.5)">0.75 mm2</text>
<text x="330.13" y="679.55" font-size="4.4" font-weight="bold" textLength="8.87" lengthAdjust="spacingAndGlyphs" fill="#000" stroke="#000" stroke-width="0.38" style="fill:#000" transform="rotate(0.03 330.1 679.5)">4013B</text>
<line x1="323.99" y1="682.60" x2="328.70" y2="677.60" stroke="#101058" stroke-width="1.1" />
<text x="310.40" y="687.95" font-size="4.4" font-weight="bold" textLength="14.01" lengthAdjust="spacingAndGlyphs" fill="#000" stroke="#000" stroke-width="0.38" style="fill:#000" transform="rotate(0.03 310.4 687.9)">0.75 mm2</text>
<text x="330.13" y="687.95" font-size="4.4" font-weight="bold" textLength="8.87" lengthAdjust="spacingAndGlyphs" fill="#000" stroke="#000" stroke-width="0.38" style="fill:#000" transform="rotate(0.03 330.1 687.9)">4013C</text>
<line x1="323.99" y1="691.00" x2="328.70" y2="686.00" stroke="#101058" stroke-width="1.1" />
<text x="310.40" y="749.05" font-size="4.4" font-weight="bold" textLength="14.01" lengthAdjust="spacingAndGlyphs" fill="#000" stroke="#000" stroke-width="0.38" style="fill:#000" transform="rotate(0.03 310.4 749.0)">0.75 mm2</text>
<text x="330.13" y="749.05" font-size="4.4" font-weight="bold" textLength="8.87" lengthAdjust="spacingAndGlyphs" fill="#000" stroke="#000" stroke-width="0.38" style="fill:#000" transform="rotate(0.03 330.1 749.0)">4013B</text>
<line x1="323.99" y1="752.10" x2="328.70" y2="747.10" stroke="#101058" stroke-width="1.1" />
<text x="310.40" y="757.75" font-size="4.4" font-weight="bold" textLength="14.01" lengthAdjust="spacingAndGlyphs" fill="#000" stroke="#000" stroke-width="0.38" style="fill:#000" transform="rotate(0.03 310.4 757.8)">0.75 mm2</text>
<text x="330.13" y="757.75" font-size="4.4" font-weight="bold" textLength="8.87" lengthAdjust="spacingAndGlyphs" fill="#000" stroke="#000" stroke-width="0.38" style="fill:#000" transform="rotate(0.03 330.1 757.8)">4013C</text>
<line x1="323.99" y1="760.80" x2="328.70" y2="755.80" stroke="#101058" stroke-width="1.1" />
<text x="310.40" y="775.25" font-size="4.4" font-weight="bold" textLength="14.01" lengthAdjust="spacingAndGlyphs" fill="#000" stroke="#000" stroke-width="0.38" style="fill:#000" transform="rotate(0.03 310.4 775.2)">0.50 mm2</text>
<text x="330.13" y="775.25" font-size="4.4" font-weight="bold" textLength="8.87" lengthAdjust="spacingAndGlyphs" fill="#000" stroke="#000" stroke-width="0.38" style="fill:#000" transform="rotate(0.03 330.1 775.2)">4013D</text>
<line x1="323.99" y1="778.30" x2="328.70" y2="773.30" stroke="#101058" stroke-width="1.1" />
<text x="415.50" y="679.55" font-size="4.4" font-weight="bold" textLength="13.57" lengthAdjust="spacingAndGlyphs" fill="#000" stroke="#000" stroke-width="0.38" style="fill:#000" transform="rotate(0.03 415.5 679.5)">0.75 mm2</text>
<text x="434.61" y="679.55" font-size="4.4" font-weight="bold" textLength="8.59" lengthAdjust="spacingAndGlyphs" fill="#000" stroke="#000" stroke-width="0.38" style="fill:#000" transform="rotate(0.03 434.6 679.5)">4013B</text>
<line x1="428.66" y1="682.60" x2="433.23" y2="677.60" stroke="#101058" stroke-width="1.1" />
<text x="415.50" y="687.95" font-size="4.4" font-weight="bold" textLength="13.57" lengthAdjust="spacingAndGlyphs" fill="#000" stroke="#000" stroke-width="0.38" style="fill:#000" transform="rotate(0.03 415.5 687.9)">0.75 mm2</text>
<text x="434.61" y="687.95" font-size="4.4" font-weight="bold" textLength="8.59" lengthAdjust="spacingAndGlyphs" fill="#000" stroke="#000" stroke-width="0.38" style="fill:#000" transform="rotate(0.03 434.6 687.9)">4013C</text>
<line x1="428.66" y1="691.00" x2="433.23" y2="686.00" stroke="#101058" stroke-width="1.1" />
<text x="415.50" y="731.75" font-size="4.4" font-weight="bold" textLength="13.57" lengthAdjust="spacingAndGlyphs" fill="#000" stroke="#000" stroke-width="0.38" style="fill:#000" transform="rotate(0.03 415.5 731.8)">0.50 mm2</text>
<text x="434.61" y="731.75" font-size="4.4" font-weight="bold" textLength="8.59" lengthAdjust="spacingAndGlyphs" fill="#000" stroke="#000" stroke-width="0.38" style="fill:#000" transform="rotate(0.03 434.6 731.8)">4013A</text>
<line x1="428.66" y1="734.80" x2="433.23" y2="729.80" stroke="#101058" stroke-width="1.1" />
<text x="415.50" y="749.05" font-size="4.4" font-weight="bold" textLength="13.57" lengthAdjust="spacingAndGlyphs" fill="#000" stroke="#000" stroke-width="0.38" style="fill:#000" transform="rotate(0.03 415.5 749.0)">0.75 mm2</text>
<text x="434.61" y="749.05" font-size="4.4" font-weight="bold" textLength="8.59" lengthAdjust="spacingAndGlyphs" fill="#000" stroke="#000" stroke-width="0.38" style="fill:#000" transform="rotate(0.03 434.6 749.0)">4013B</text>
<line x1="428.66" y1="752.10" x2="433.23" y2="747.10" stroke="#101058" stroke-width="1.1" />
<text x="415.50" y="757.75" font-size="4.4" font-weight="bold" textLength="13.57" lengthAdjust="spacingAndGlyphs" fill="#000" stroke="#000" stroke-width="0.38" style="fill:#000" transform="rotate(0.03 415.5 757.8)">0.75 mm2</text>
<text x="434.61" y="757.75" font-size="4.4" font-weight="bold" textLength="8.59" lengthAdjust="spacingAndGlyphs" fill="#000" stroke="#000" stroke-width="0.38" style="fill:#000" transform="rotate(0.03 434.6 757.8)">4013C</text>
<line x1="428.66" y1="760.80" x2="433.23" y2="755.80" stroke="#101058" stroke-width="1.1" />
<text x="581.20" y="705.65" font-size="4.4" font-weight="bold" textLength="12.45" lengthAdjust="spacingAndGlyphs" fill="#000" stroke="#000" stroke-width="0.38" style="fill:#000" transform="rotate(0.03 581.2 705.6)">0.75 mm2</text>
<text x="598.73" y="705.65" font-size="4.4" font-weight="bold" textLength="7.87" lengthAdjust="spacingAndGlyphs" fill="#000" stroke="#000" stroke-width="0.38" style="fill:#000" transform="rotate(0.03 598.7 705.6)">4012</text>
<line x1="593.26" y1="708.70" x2="597.46" y2="703.70" stroke="#101058" stroke-width="1.1" />
<text x="737.00" y="705.65" font-size="4.4" font-weight="bold" textLength="12.74" lengthAdjust="spacingAndGlyphs" fill="#000" stroke="#000" stroke-width="0.38" style="fill:#000" transform="rotate(0.03 737.0 705.6)">0.75 mm2</text>
<text x="754.94" y="705.65" font-size="4.4" font-weight="bold" textLength="8.06" lengthAdjust="spacingAndGlyphs" fill="#000" stroke="#000" stroke-width="0.38" style="fill:#000" transform="rotate(0.03 754.9 705.6)">4012</text>
<line x1="749.35" y1="708.70" x2="753.64" y2="703.70" stroke="#101058" stroke-width="1.1" />
<text x="581.20" y="775.25" font-size="4.4" font-weight="bold" textLength="12.45" lengthAdjust="spacingAndGlyphs" fill="#000" stroke="#000" stroke-width="0.38" style="fill:#000" transform="rotate(0.03 581.2 775.2)">0.75 mm2</text>
<text x="598.73" y="775.25" font-size="4.4" font-weight="bold" textLength="7.87" lengthAdjust="spacingAndGlyphs" fill="#000" stroke="#000" stroke-width="0.38" style="fill:#000" transform="rotate(0.03 598.7 775.2)">4013</text>
<line x1="593.26" y1="778.30" x2="597.46" y2="773.30" stroke="#101058" stroke-width="1.1" />
<text x="737.00" y="775.25" font-size="4.4" font-weight="bold" textLength="12.74" lengthAdjust="spacingAndGlyphs" fill="#000" stroke="#000" stroke-width="0.38" style="fill:#000" transform="rotate(0.03 737.0 775.2)">0.75 mm2</text>
<text x="754.94" y="775.25" font-size="4.4" font-weight="bold" textLength="8.06" lengthAdjust="spacingAndGlyphs" fill="#000" stroke="#000" stroke-width="0.38" style="fill:#000" transform="rotate(0.03 754.9 775.2)">4013</text>
<line x1="749.35" y1="778.30" x2="753.64" y2="773.30" stroke="#101058" stroke-width="1.1" />
<path d="M448.1 935.4 L455.0 929.0 L455.0 941.7 Z" stroke="none" stroke-width="1" fill="#1c1c1c" />
<path d="M458.8 929.0 L460.1 929.0 L460.1 941.7 L458.8 941.7 L457.1 935.4 Z" stroke="none" stroke-width="1" fill="#1c1c1c" />
<path d="M475.1 935.4 L482.0 929.0 L482.0 941.7 Z" stroke="none" stroke-width="1" fill="#1c1c1c" />
<rect x="494.50" y="925.50" width="114.00" height="18.90" fill="#fff" stroke="#929292" stroke-width="1.1" />
<text x="499.0" y="939.9" font-size="12.4" fill="#111" stroke="#111" stroke-width="0.3">9</text><line x1="513.9" y1="930.0" x2="510.3" y2="941.8" stroke="#111" stroke-width="1.15"/><text x="519.0" y="939.9" font-size="12.4" fill="#111" stroke="#111" stroke-width="0.3" textLength="13.6" lengthAdjust="spacingAndGlyphs">25</text>
<path d="M598.8 934.3 L604.0 934.3 L601.4 937.2 Z" stroke="#222" stroke-width="0.4" fill="#222" />
<path d="M618.0 928.9 L625.2 935.4 L618.0 941.8 Z" stroke="none" stroke-width="1" fill="#1c1c1c" />
<path d="M641.0 928.9 L642.4 928.9 L644.1 935.4 L642.4 941.8 L641.0 941.8 Z" stroke="none" stroke-width="1" fill="#1c1c1c" />
<path d="M646.0 928.9 L653.2 935.4 L646.0 941.8 Z" stroke="none" stroke-width="1" fill="#1c1c1c" />
<path d="M665.7 937.4 L665.7 929.2 L673.0 929.2" stroke="#4468a8" stroke-width="1.0" fill="none" />
<rect x="665.20" y="928.40" width="7.80" height="1.70" fill="#3a62b0" stroke="none" stroke-width="1" />
<line x1="665.70" y1="937.20" x2="670.50" y2="937.20" stroke="#b8c4dc" stroke-width="0.8" />
<rect x="671.10" y="934.60" width="9.20" height="8.40" fill="#fff" stroke="#666" stroke-width="1.3" />
<path d="M680.2 930.8 L674.2 930.8 M676.6 928.6 L674.0 930.8 L676.6 933.0" stroke="#4c9a6a" stroke-width="1.1" fill="none" />
<rect x="692.00" y="929.00" width="9.40" height="8.00" fill="#f4f2f2" stroke="#cfc4c4" stroke-width="1" />
<rect x="692.00" y="928.60" width="9.40" height="1.40" fill="#d8cccc" stroke="none" stroke-width="1" />
<rect x="696.50" y="935.00" width="9.80" height="8.20" fill="#eaf0fa" stroke="#c4c4cc" stroke-width="1" />
<path d="M692.0 939.6 L696.0 939.6 M694.4 938.0 L696.2 939.6 L694.4 941.2" stroke="#b5d4c0" stroke-width="1" fill="none" />
<rect x="1252.30" y="927.20" width="22.40" height="17.60" fill="#c6d6f4" stroke="none" stroke-width="1" />
<rect x="1257.50" y="929.40" width="10.60" height="13.60" fill="#fff" stroke="#6a6a6a" stroke-width="0.9" />
<line x1="1259.60" y1="932.60" x2="1266.00" y2="932.60" stroke="#c4a4a4" stroke-width="0.7" />
<line x1="1259.60" y1="935.60" x2="1266.00" y2="935.60" stroke="#c4a4a4" stroke-width="0.7" />
<line x1="1259.60" y1="938.60" x2="1266.00" y2="938.60" stroke="#c4a4a4" stroke-width="0.7" />
<rect x="1282.60" y="928.60" width="10.00" height="9.00" fill="#fff" stroke="#666" stroke-width="1" />
<line x1="1284.60" y1="931.60" x2="1290.40" y2="931.60" stroke="#999" stroke-width="0.8" />
<line x1="1284.60" y1="934.60" x2="1290.40" y2="934.60" stroke="#999" stroke-width="0.8" />
<path d="M1282.6 944 L1282.6 939.6 L1292.6 939.6 L1292.6 944" stroke="#666" stroke-width="1" fill="none" />
<line x1="1284.60" y1="942.40" x2="1290.40" y2="942.40" stroke="#999" stroke-width="0.8" />
</svg>
</body></html>
